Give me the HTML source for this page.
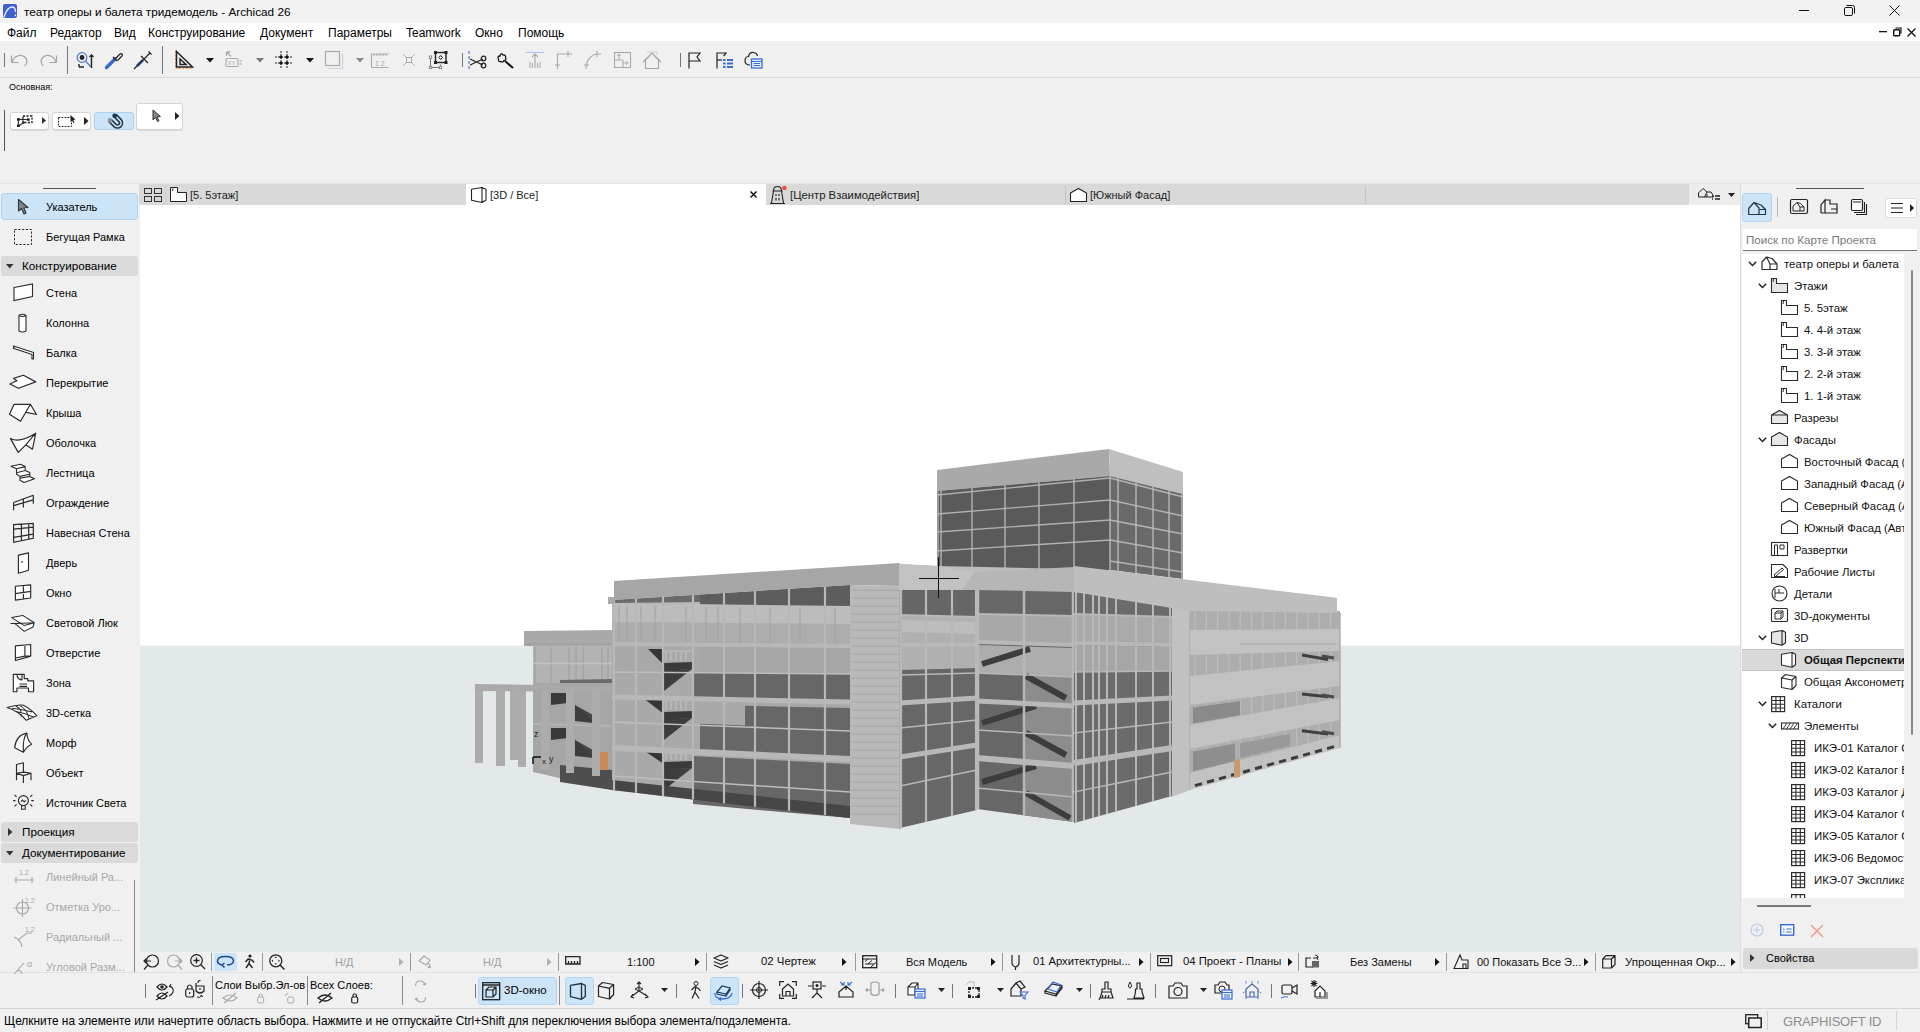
<!DOCTYPE html>
<html><head><meta charset="utf-8">
<style>
*{box-sizing:border-box}
html,body{margin:0;padding:0}
body{width:1920px;height:1032px;position:relative;overflow:hidden;background:#f0f0f0;font-family:"Liberation Sans",sans-serif;font-size:12px;color:#000}
.a{position:absolute}
.t{position:absolute;white-space:nowrap;line-height:1}
svg{position:absolute;overflow:visible}
.s{font-size:11px}
.g{color:#9a9a9a}
</style></head>
<body>
<!-- title bar -->
<div class="a" style="left:0;top:0;width:1920px;height:23px;background:#f2f2f2"></div>
<svg style="left:2px;top:3px" width="16" height="16"><rect x="1" y="1" width="14" height="14" rx="2" fill="#3d5fd0"/><path d="M2 14 C4 8 7 4 10 4 C12.5 4 13.5 6 13.5 9" stroke="#eaf2ff" stroke-width="1.3" fill="none"/><rect x="12.6" y="11.5" width="1.6" height="1.6" fill="#eaf2ff"/></svg>
<div class="t" style="left:24px;top:6px;font-size:11.75px">театр оперы и балета тридемодель - Archicad 26</div>
<svg style="left:1799px;top:10px" width="14" height="2"><rect x="0" y="0" width="10" height="1" fill="#111"/></svg>
<svg style="left:1844px;top:5px" width="12" height="12"><rect x="0.5" y="2.5" width="8" height="8" rx="1.3" stroke="#111" fill="none"/><path d="M2.5 0.5 H8.5 Q10.5 0.5 10.5 2.5 V8.5" stroke="#111" fill="none"/></svg>
<svg style="left:1889px;top:5px" width="12" height="12"><path d="M0.5 0.5 L10.5 10.5 M10.5 0.5 L0.5 10.5" stroke="#111" fill="none"/></svg>

<!-- menu bar -->
<div class="a" style="left:0;top:23px;width:1920px;height:18px;background:#fff"></div>
<div class="t" style="left:7px;top:27px">Файл</div>
<div class="t" style="left:50px;top:27px">Редактор</div>
<div class="t" style="left:114px;top:27px">Вид</div>
<div class="t" style="left:148px;top:27px">Конструирование</div>
<div class="t" style="left:260px;top:27px">Документ</div>
<div class="t" style="left:328px;top:27px">Параметры</div>
<div class="t" style="left:406px;top:27px">Teamwork</div>
<div class="t" style="left:475px;top:27px">Окно</div>
<div class="t" style="left:518px;top:27px">Помощь</div>
<svg style="left:1879px;top:31px" width="10" height="2"><rect width="8" height="1.3" fill="#111"/></svg>
<svg style="left:1893px;top:27px" width="10" height="10"><rect x="0.7" y="2.7" width="6" height="6" rx="1" stroke="#111" stroke-width="1.4" fill="none"/><path d="M2.5 1 H8 V6.5" stroke="#111" stroke-width="1.2" fill="none"/></svg>
<svg style="left:1907px;top:28px" width="10" height="10"><path d="M0.5 0.5 L8.5 8.5 M8.5 0.5 L0.5 8.5" stroke="#111" stroke-width="1.3" fill="none"/></svg>
<!-- toolbar line -->
<div class="a" style="left:0;top:77px;width:1920px;height:1px;background:#dadada"></div>
<!-- left toolbox -->
<div class="a" style="left:0;top:184px;width:139px;height:788px;background:#f0f0f0"></div>
<!-- tab bar -->
<div class="a" style="left:139px;top:184px;width:1601px;height:21px;background:#d9d9d9"></div>
<div class="a" style="left:466px;top:184px;width:300px;height:21px;background:#fff"></div>
<div class="a" style="left:1689px;top:184px;width:51px;height:21px;background:#ececec"></div>
<!-- viewport -->
<div class="a" style="left:140px;top:205px;width:1600px;height:441px;background:#fff"></div>
<div class="a" style="left:140px;top:646px;width:1600px;height:306px;background:#e3e9ea"></div>
<div class="a" style="left:140px;top:645px;width:1600px;height:1px;background:#f6f8f8"></div>
<!-- bottom control bar -->
<div class="a" style="left:140px;top:952px;width:1600px;height:20px;background:#f0f0f0"></div>
<div class="a" style="left:0;top:972px;width:1920px;height:1px;background:#e2e2e2"></div>
<div class="a" style="left:0;top:1008px;width:1920px;height:1px;background:#d6d6d6"></div>
<!-- right navigator -->
<div class="a" style="left:1740px;top:184px;width:1px;height:788px;background:#dcdcdc"></div>
<!-- main toolbar icons (y 51-69) -->
<div class="a" style="left:4px;top:53px;width:1px;height:14px;background:#777"></div>
<svg style="left:10px;top:52px" width="20" height="18"><path d="M1.5 10.5 V3.5 M1.5 10.5 H8.5 M2 10 C4 4 10 2 14 4.5 C18 7 17.5 12 14.5 14" stroke="#a6a6a6" stroke-width="1.2" fill="none"/></svg>
<svg style="left:39px;top:52px" width="20" height="18"><path d="M17.5 10.5 V3.5 M17.5 10.5 H10.5 M17 10 C15 4 9 2 5 4.5 C1 7 1.5 12 4.5 14" stroke="#a6a6a6" stroke-width="1.2" fill="none"/></svg>
<div class="a" style="left:67px;top:46px;width:1px;height:28px;background:#777"></div>
<svg style="left:76px;top:51px" width="20" height="19"><circle cx="6" cy="6.5" r="4.8" stroke="#4a78d8" stroke-width="1.2" fill="none"/><circle cx="6" cy="6.5" r="2.4" fill="#222"/><path d="M9.5 10 L15 16" stroke="#4a78d8" stroke-width="1.2"/><path d="M15.5 17 V4 M13.5 6 L15.5 4 L17.5 6 M3 16 H8 M3 16 V13" stroke="#222" stroke-width="1.4" fill="none"/></svg>
<svg style="left:104px;top:51px" width="20" height="19"><path d="M2.5 16.5 L11 8" stroke="#3d68cf" stroke-width="3.5" stroke-linecap="round"/><path d="M9 6 L13 10 M11.5 7.5 L15.5 3.5 Q17 2 18 3 Q19 4 17.5 5.5 L13.5 9.5" stroke="#222" stroke-width="1.2" fill="none"/></svg>
<svg style="left:133px;top:51px" width="20" height="19"><path d="M1 18 L4 15" stroke="#222" stroke-width="1.2"/><path d="M4 15 L10 9" stroke="#3d68cf" stroke-width="3"/><path d="M4 15 L13 6 M8 5 L15 12 M13 6 L17 2 M15.5 0.5 L18.5 3.5" stroke="#222" stroke-width="1.2" fill="none"/></svg>
<div class="a" style="left:162px;top:46px;width:1px;height:28px;background:#777"></div>
<svg style="left:174px;top:50px" width="20" height="20"><path d="M1.5 1 V18.5 H19" stroke="#f0a060" stroke-width="1" stroke-dasharray="2 1.5" fill="none"/><path d="M2.5 1.5 L18.5 17 H2.5 Z M6 9 L12 14.5 H6 Z" stroke="#222" stroke-width="1.5" fill="none"/></svg>
<svg style="left:206px;top:58px" width="9" height="5"><path d="M0 0 H8 L4 4.5 Z" fill="#111"/></svg>
<svg style="left:225px;top:51px" width="20" height="18"><path d="M1.5 1 L6 5.5 M1.5 1 V5 M1.5 1 H5.5" stroke="#aaa" stroke-width="1.3" fill="none"/><rect x="1" y="7.5" width="12" height="8" rx="1" stroke="#aaa" stroke-width="1.1" fill="none"/><text x="2.5" y="14" font-size="6" fill="#aaa" font-family="Liberation Sans">XY</text><path d="M14.5 10 H17 M14.5 13 H17" stroke="#aaa"/></svg>
<svg style="left:256px;top:58px" width="9" height="5"><path d="M0 0 H8 L4 4.5 Z" fill="#777"/></svg>
<svg style="left:275px;top:51px" width="20" height="19"><path d="M6 0 V18 M12 0 V18 M0 6 H18 M0 12 H18" stroke="#222" stroke-width="1" stroke-dasharray="2 1"/><circle cx="6" cy="6" r="1.6" fill="#111"/><circle cx="12" cy="6" r="1.6" fill="#111"/><circle cx="6" cy="12" r="1.6" fill="#111"/><circle cx="12" cy="12" r="1.6" fill="#111"/></svg>
<svg style="left:306px;top:58px" width="9" height="5"><path d="M0 0 H8 L4 4.5 Z" fill="#111"/></svg>
<svg style="left:325px;top:51px" width="20" height="19"><rect x="0.5" y="0.5" width="14" height="14" stroke="#aaa" stroke-width="1.2" fill="none"/><path d="M3 17.5 H17.5 V3" stroke="#c5d3e8" stroke-width="1.2" fill="none"/></svg>
<svg style="left:356px;top:58px" width="9" height="5"><path d="M0 0 H8 L4 4.5 Z" fill="#888"/></svg>
<svg style="left:371px;top:53px" width="20" height="16"><path d="M0.5 14.5 V1 H17.5 M17.5 14.5 H0.5 M3 1 V3 M6 1 V3 M9 1 V3 M12 1 V3 M15 1 V3" stroke="#aaa" stroke-width="1.1" fill="none"/><text x="4" y="12.5" font-size="7" fill="#aaa" font-family="Liberation Sans">1 2</text></svg>
<svg style="left:403px;top:54px" width="14" height="14"><rect x="3.5" y="3.5" width="5" height="5" stroke="#aaa" fill="none"/><path d="M0.5 0.5 L3.5 3.5 M11.5 0.5 L8.5 3.5 M0.5 11.5 L3.5 8.5 M11.5 11.5 L8.5 8.5" stroke="#aaa"/></svg>
<svg style="left:429px;top:50px" width="20" height="20"><rect x="6.5" y="2.5" width="10.5" height="10" stroke="#222" stroke-width="1.4" fill="none"/><rect x="5" y="1" width="3" height="3" fill="#222"/><rect x="15.5" y="1" width="3" height="3" fill="#222"/><rect x="5" y="11" width="3" height="3" fill="#222"/><rect x="15.5" y="11" width="3" height="3" fill="#222"/><path d="M11.7 5.5 L13.5 7.5 L11.7 9.5 L9.9 7.5 Z" stroke="#222" fill="none"/><path d="M1.5 7 V17.5 H11.5 V14.5" stroke="#777" fill="none"/><rect x="0.3" y="6" width="2.4" height="2.4" stroke="#777" fill="#fff" stroke-width="0.8"/><rect x="0.3" y="16.3" width="2.4" height="2.4" stroke="#777" fill="#fff" stroke-width="0.8"/><rect x="10.3" y="16.3" width="2.4" height="2.4" stroke="#777" fill="#fff" stroke-width="0.8"/></svg>
<div class="a" style="left:462px;top:53px;width:1px;height:14px;background:#777"></div>
<svg style="left:468px;top:51px" width="20" height="19"><path d="M1 0 V18" stroke="#3a62c8" stroke-dasharray="3 2"/><path d="M2 8 L15 14 M2 14 L15 8" stroke="#222" stroke-width="1.2"/><circle cx="15.5" cy="7.5" r="2.3" stroke="#222" stroke-width="1.2" fill="none"/><circle cx="15.5" cy="14.5" r="2.3" stroke="#222" stroke-width="1.2" fill="none"/></svg>
<svg style="left:497px;top:52px" width="20" height="17"><path d="M8 9 L16 16" stroke="#111" stroke-width="2"/><path d="M6 3 Q4 0 3 4 Q0 4 1.5 7 Q1 10 4 9.5 Q6 11 7 8.5 Q10 8 8.5 5.5 Q9 2.5 6 3 Z" stroke="#111" stroke-width="1.3" fill="none"/></svg>
<svg style="left:526px;top:51px" width="20" height="19"><path d="M0 1.5 H18" stroke="#a9c4ea" stroke-width="1.1"/><path d="M9 3 V17 M6 6 L9 3 L12 6 M4 11 V17 M14 11 V17 M6.5 12 V17 M11.5 12 V17" stroke="#aaa" stroke-width="1.1" fill="none"/></svg>
<svg style="left:555px;top:51px" width="20" height="19"><path d="M2.5 18 V3 H13 M13 0 V6 M13 3 H17 M0 14 H5" stroke="#aaa" stroke-width="1.1" fill="none"/></svg>
<svg style="left:584px;top:51px" width="20" height="19"><path d="M2 18 C2 10 6 4 13 3 M13 0 V6 M13 3 H17 M0 14 H5" stroke="#aaa" stroke-width="1.1" fill="none"/></svg>
<svg style="left:614px;top:51px" width="20" height="19"><rect x="0.5" y="1.5" width="16" height="15" stroke="#aaa" stroke-width="1.1" fill="none"/><path d="M0.5 9 H9 V16.5 M5 8 V3 M3 5 L5 3 L7 5 M9 12 H14 M12 10 L14 12 L12 14" stroke="#aaa" fill="none"/></svg>
<svg style="left:643px;top:51px" width="20" height="19"><path d="M2.5 17.5 V9 L9 2 L15.5 9 V17.5 Z M0 11 L9 2 L18 11" stroke="#aaa" stroke-width="1.2" fill="none"/><path d="M4 1 H14 V4" stroke="#ccc" fill="none"/></svg>
<div class="a" style="left:680px;top:53px;width:1px;height:14px;background:#777"></div>
<svg style="left:688px;top:52px" width="14" height="17"><path d="M1 16.5 V1 H12 L9 5 L12 9 H1" stroke="#222" stroke-width="1.2" fill="none"/></svg>
<svg style="left:716px;top:52px" width="19" height="17"><path d="M1 16.5 V1 H10 L7.5 4" stroke="#222" stroke-width="1.2" fill="none"/><path d="M1 8 H6" stroke="#222" stroke-width="1.2"/><rect x="7" y="7" width="2.5" height="2" fill="#3a6ad8"/><rect x="11" y="7" width="6" height="2" fill="#3a6ad8"/><rect x="7" y="10.5" width="2.5" height="2" fill="#3a6ad8"/><rect x="11" y="10.5" width="6" height="2" fill="#3a6ad8"/><rect x="7" y="14" width="2.5" height="2" fill="#3a6ad8"/><rect x="11" y="14" width="6" height="2" fill="#3a6ad8"/></svg>
<svg style="left:744px;top:51px" width="20" height="19"><path d="M6 14 Q1 14 1 9.5 Q1 6 4.5 5.5 Q5.5 1 9.5 1.5 Q13 2 13.5 5" stroke="#222" stroke-width="1.2" fill="none"/><rect x="7.5" y="8" width="10.5" height="9" stroke="#3a6ad8" stroke-width="1.3" fill="#e8f0fb"/><path d="M7.5 10.5 H18 M9.5 12.5 H16 M9.5 14.5 H16" stroke="#3a6ad8" stroke-width="1"/></svg>

<!-- info box -->
<div class="t" style="left:9px;top:83px;font-size:9px">Основная:</div>
<div class="a" style="left:4px;top:110px;width:1px;height:41px;background:#555"></div>
<div class="a" style="left:10px;top:112px;width:39px;height:18px;background:#fff;border:1px solid #d4d4d4;border-radius:3px;box-shadow:0 1px 0 #d8d8d8"></div>
<svg style="left:16px;top:114px" width="20" height="14"><rect x="7" y="2" width="9" height="6.5" stroke="#222" stroke-width="1.3" stroke-dasharray="2.2 1.3" fill="none"/><rect x="1" y="4.2" width="2.8" height="2.5" fill="#111"/><rect x="1" y="10.5" width="2.8" height="2.4" fill="#111"/><rect x="10.8" y="4.4" width="2.8" height="2.3" fill="#111"/><path d="M3.8 5.5 H10.8 M2.4 6.7 V10.5 M3.8 11.2 L7.8 8.4 M6.2 8.2 L8 8.3 L7.6 9.8" stroke="#222" stroke-width="1.1" fill="none"/></svg>
<svg style="left:42px;top:117px" width="6" height="8"><path d="M0 0 L4 3.5 L0 7 Z" fill="#333"/></svg>
<div class="a" style="left:52px;top:112px;width:39px;height:18px;background:#fff;border:1px solid #d4d4d4;border-radius:3px;box-shadow:0 1px 0 #d8d8d8"></div>
<svg style="left:58px;top:114px" width="20" height="14"><rect x="0.5" y="3.5" width="13" height="9" stroke="#222" stroke-dasharray="1.8 1.2" fill="none"/><path d="M12.5 1 L12.5 8 L14 6.5 L15.5 9 L16.5 8.5 L15.3 6 L17.5 5.5 Z" fill="#222"/></svg>
<svg style="left:84px;top:117px" width="6" height="8"><path d="M0 0 L4.5 4 L0 8 Z" fill="#222"/></svg>
<div class="a" style="left:94px;top:112px;width:40px;height:18px;background:#cce4f7;border:1px solid #aecfee;border-radius:3px"></div>
<svg style="left:106px;top:113px" width="18" height="18"><path d="M4 7.5 L9 12.5 A3.5 3.5 0 0 0 14 7.5 L9 2.5" stroke="#24374d" stroke-width="4.6" fill="none"/><path d="M4 7.5 L9 12.5 A3.5 3.5 0 0 0 14 7.5 L9 2.5" stroke="#cce4f7" stroke-width="1.6" fill="none"/><circle cx="8.6" cy="2.8" r="2.3" fill="#1e3346"/><circle cx="4" cy="7.4" r="2.3" fill="#8a9298"/></svg>
<div class="a" style="left:136px;top:103px;width:47px;height:27px;background:#fff;border:1px solid #d4d4d4;border-radius:3px;box-shadow:0 1px 0 #d8d8d8"></div>
<svg style="left:152px;top:109px" width="10" height="14"><path d="M1 1 L1 11 L3.5 8.5 L5.5 12.5 L7 11.8 L5 8 L8.5 7.5 Z" fill="#8a8a8a" stroke="#333" stroke-width="1"/></svg>
<svg style="left:175px;top:112px" width="6" height="8"><path d="M0 0 L4.5 4 L0 8 Z" fill="#222"/></svg>
<div class="a" style="left:0;top:183px;width:1920px;height:1px;background:#e4e4e4"></div>
<div class="a" style="left:43px;top:188px;width:53px;height:1px;background:#555"></div>
<div class="a" style="left:1px;top:193px;width:137px;height:27px;background:#cce4f7;border:1px solid #b3d4f0;border-radius:3px"></div>
<svg style="left:17px;top:198px" width="14" height="18"><path d="M1.5 1.5 L1.5 13 L4.5 10.5 L7 16 L9 15 L6.8 9.8 L11 9.5 Z" fill="#7e8790" stroke="#333" stroke-width="1.1" stroke-linejoin="round"/></svg>
<div class="t s" style="left:46px;top:202px">Указатель</div>
<svg style="left:14px;top:229px" width="20" height="18"><rect x="0.5" y="0.5" width="17" height="15" stroke="#2b2b2b" stroke-dasharray="2.2 1.6" fill="none"/></svg>
<div class="t s" style="left:46px;top:232px">Бегущая Рамка</div>
<div class="a" style="left:1px;top:256px;width:137px;height:20px;background:#dadada;border-radius:3px"></div>
<svg style="left:6px;top:263.5px" width="9" height="6"><path d="M0 0 H7.5 L3.75 4.5 Z" fill="#333"/></svg>
<div class="t" style="left:22px;top:260.0px;font-size:11.7px">Конструирование</div>
<svg style="left:13px;top:283px" width="24" height="20"><path d="M1 4.5 L19.5 1 V13.5 L1 17.5 Z" stroke="#2b2b2b" stroke-width="1.1" fill="#fff"/></svg>
<div class="t s" style="left:46px;top:288px">Стена</div>
<svg style="left:13px;top:313px" width="24" height="20"><path d="M6 2.5 Q9.5 0 13 2.5 V18 Q9.5 20 6 18 Z M6 2.5 Q9.5 4.5 13 2.5" stroke="#2b2b2b" stroke-width="1.1" fill="#fff"/></svg>
<div class="t s" style="left:46px;top:318px">Колонна</div>
<svg style="left:13px;top:343px" width="24" height="20"><path d="M0.5 3 L20.5 9.5 V16 L19 16 V11.5 L1 5.5 Z M0.5 3 V6" stroke="#2b2b2b" stroke-width="1.1" fill="#fff" stroke-linejoin="round"/></svg>
<div class="t s" style="left:46px;top:348px">Балка</div>
<svg style="left:13px;top:373px" width="24" height="20"><path d="M0.6 5.4 L10.4 2.2 L22.7 8.9 L5.5 15.3 L-3.2 11 L4 7.8 Z" stroke="#2b2b2b" stroke-width="1.2" fill="#fff" stroke-linejoin="round"/></svg>
<div class="t s" style="left:46px;top:378px">Перекрытие</div>
<svg style="left:13px;top:403px" width="24" height="20"><path d="M1.1 1.3 H17.4 L7.5 18.2 L-3.5 11.2 Z M17.4 1.3 L23.5 11.5 L13.3 9.4" stroke="#2b2b2b" stroke-width="1.2" fill="#fff" stroke-linejoin="round"/></svg>
<div class="t s" style="left:46px;top:408px">Крыша</div>
<svg style="left:13px;top:433px" width="24" height="20"><path d="M-2.6 5.4 Q6.4 10.5 22.7 0.2 L19.5 16.2 L12.8 11.8 L5.2 19.4 Z M22.7 0.2 L12.8 11.8" stroke="#2b2b2b" stroke-width="1.2" fill="#fff" stroke-linejoin="round"/></svg>
<div class="t s" style="left:46px;top:438px">Оболочка</div>
<svg style="left:13px;top:463px" width="24" height="20"><path d="M-2 3.3 L7.5 1.3 L12.2 3.6 V7.5 L16.8 9.6 V13.4 L21.5 15.8 L11 19.5 L7 17.3 V13.4 L3.5 11.3 V5.7 Z M3.5 5.7 L12.2 3.6 M3.5 9.7 L12.2 7.5 M7 13.4 L16.8 11.3 M7 15.3 L16.8 13.4" stroke="#2b2b2b" stroke-width="1.1" fill="#fff" stroke-linejoin="round"/></svg>
<div class="t s" style="left:46px;top:468px">Лестница</div>
<svg style="left:13px;top:493px" width="24" height="20"><path d="M0.6 9.5 V17.3 M10.4 6.3 V14.4 M20.3 2.2 V10.7 M0.6 9.5 L20.3 2.2 M0.6 12.7 L20.3 6.9" stroke="#2b2b2b" stroke-width="1.2" fill="none"/></svg>
<div class="t s" style="left:46px;top:498px">Ограждение</div>
<svg style="left:13px;top:523px" width="24" height="20"><path d="M0.6 1.6 L20.3 0.4 V15.3 L0.6 19.3 Z M8.4 1.1 V17.7 M15.7 0.7 V16.2 M0.6 6.2 L20.3 4.2 M0.6 14.4 L20.3 11.2" stroke="#2b2b2b" stroke-width="1.2" fill="none"/></svg>
<div class="t s" style="left:46px;top:528px">Навесная Стена</div>
<svg style="left:13px;top:553px" width="24" height="20"><path d="M5.4 2.1 L15.5 -0.1 V17.3 L5.4 20.3 Z" stroke="#2b2b2b" stroke-width="1.15" fill="#fff" stroke-linejoin="round"/><path d="M8 9.3 L10 8.5" stroke="#2b2b2b" stroke-width="1.1"/></svg>
<div class="t s" style="left:46px;top:558px">Дверь</div>
<svg style="left:13px;top:583px" width="24" height="20"><path d="M2.4 3.3 L17.7 1.9 V15 L2.4 17.1 Z M10.4 2.6 V16 M2.4 10.6 L17.7 8.4" stroke="#2b2b2b" stroke-width="1.15" fill="#fff" stroke-linejoin="round"/></svg>
<div class="t s" style="left:46px;top:588px">Окно</div>
<svg style="left:13px;top:613px" width="24" height="20"><path d="M1.7 10.4 L21.3 9.7 L19.9 14 L11.2 18.4 Z M-1.2 4.6 L9.7 2.4 L21.3 9.7 L11.2 12.6 Z M-2.5 10.4 H1.7" stroke="#2b2b2b" stroke-width="1.05" fill="#fff" stroke-linejoin="round"/></svg>
<div class="t s" style="left:46px;top:618px">Световой Люк</div>
<svg style="left:13px;top:643px" width="24" height="20"><path d="M2.4 2.9 L17.7 1.5 V13.1 L2.4 17.5 Z M11.9 1.9 V13.1 M2.4 15 L11.9 13.1 H17.7" stroke="#2b2b2b" stroke-width="1.15" fill="#fff" stroke-linejoin="round"/></svg>
<div class="t s" style="left:46px;top:648px">Отверстие</div>
<svg style="left:13px;top:673px" width="24" height="20"><path d="M0.3 1.3 H11.2 V5.6 H14.8 V7.8 H20.6 V18.7 H15.5 V15 H3.9 V18.7 H0.3 Z M4 1.3 Q4 6.8 9 6.8 V1.3 M6.5 11 H14 M6.5 13.3 H14" stroke="#2b2b2b" stroke-width="1.15" fill="#fff" stroke-linejoin="round"/></svg>
<div class="t s" style="left:46px;top:678px">Зона</div>
<svg style="left:13px;top:703px" width="24" height="20"><path d="M-5.8 4.6 Q3 1.5 10.4 2.2 Q18 6 23.8 12.7 L13.3 17.3 Q5 8 -5.8 4.6 Z M3 3 Q10 7 8 13.5 M6.5 2.4 Q14 6 16 15.5 M-1 5.2 Q10 6.5 19 9 M3 8.5 Q12 10 20.5 14" stroke="#2b2b2b" stroke-width="1.05" fill="#fff" stroke-linejoin="round"/></svg>
<div class="t s" style="left:46px;top:708px">3D-сетка</div>
<svg style="left:13px;top:733px" width="24" height="20"><path d="M13.9 0.1 Q3 2 1.7 14.7 L10.4 19.3 Q14 13 18.6 11.2 Q14 7 13.9 0.1 Z M13.9 0.1 Q9.5 5 10.4 19.3" stroke="#2b2b2b" stroke-width="1.15" fill="#fff" stroke-linejoin="round"/></svg>
<div class="t s" style="left:46px;top:738px">Морф</div>
<svg style="left:13px;top:763px" width="24" height="20"><path d="M3.5 17.2 V1.5 L10.4 -0.2 V9 M3.5 10.3 L10.4 12.6 L18 10.3 L11 9.1 Z M10.4 12.6 V20.1 M18 10.3 V17.2" stroke="#2b2b2b" stroke-width="1.15" fill="none" stroke-linejoin="round"/></svg>
<div class="t s" style="left:46px;top:768px">Объект</div>
<svg style="left:13px;top:793px" width="24" height="20"><circle cx="10.4" cy="7.6" r="5" stroke="#2b2b2b" stroke-width="1.15" fill="none"/><path d="M8.6 12.5 V16.3 H12.2 V12.5 M0 7.6 H2.5 M18.3 7.6 H20.8 M1.5 1.8 L3.6 3.9 M19.3 1.8 L17.2 3.9 M1.5 13.4 L3.6 11.3 M19.3 13.4 L17.2 11.3 M8 8.6 L9.5 7 L11.2 9 L12.8 7.4" stroke="#2b2b2b" stroke-width="1.1" fill="none"/></svg>
<div class="t s" style="left:46px;top:798px">Источник Света</div>
<div class="a" style="left:1px;top:822px;width:137px;height:20px;background:#dadada;border-radius:3px"></div>
<svg style="left:8px;top:828.0px" width="6" height="9"><path d="M0 0 L4.5 4 L0 8 Z" fill="#333"/></svg>
<div class="t" style="left:22px;top:826.0px;font-size:11.7px">Проекция</div>
<div class="a" style="left:1px;top:843px;width:137px;height:20px;background:#dadada;border-radius:3px"></div>
<svg style="left:6px;top:850.5px" width="9" height="6"><path d="M0 0 H7.5 L3.75 4.5 Z" fill="#333"/></svg>
<div class="t" style="left:22px;top:847.0px;font-size:11.7px">Документирование</div>
<svg style="left:13px;top:867px" width="24" height="20"><path d="M1 13 H21 M3 10 V16 M19 10 V16" stroke="#a8a8a8" stroke-width="1.1" fill="none"/><text x="6" y="8" font-size="7" fill="#a8a8a8" font-family="Liberation Sans">1.2</text></svg>
<div class="t s" style="left:46px;top:872px;color:#a8a8a8">Линейный Ра...</div>
<svg style="left:13px;top:897px" width="24" height="20"><circle cx="9.5" cy="11" r="6" stroke="#a8a8a8" stroke-width="1.1" fill="none"/><path d="M9.5 2 V20 M0.5 11 H18.5" stroke="#a8a8a8" stroke-width="1.1"/><text x="12" y="6" font-size="7" fill="#a8a8a8" font-family="Liberation Sans">1.2</text></svg>
<div class="t s" style="left:46px;top:902px;color:#a8a8a8">Отметка Уро...</div>
<svg style="left:13px;top:927px" width="24" height="20"><path d="M1 10 Q8 13 9 20 M5 13 L14 6 H19" stroke="#a8a8a8" stroke-width="1.1" fill="none"/><text x="12" y="5" font-size="7" fill="#a8a8a8" font-family="Liberation Sans">1.2</text></svg>
<div class="t s" style="left:46px;top:932px;color:#a8a8a8">Радиальный ...</div>
<svg style="left:13px;top:957px" width="24" height="20"><path d="M1 17 L11 6 M4 14 Q8 12 9 17" stroke="#a8a8a8" stroke-width="1.1" fill="none"/><text x="14" y="10" font-size="9" fill="#a8a8a8" font-family="Liberation Sans">α</text></svg>
<div class="t s" style="left:46px;top:962px;color:#a8a8a8">Угловой Разм...</div>
<div class="a" style="left:134px;top:880px;width:1px;height:92px;background:#888"></div>
<!-- tabs -->
<svg style="left:144px;top:188px" width="20" height="16"><rect x="0.5" y="0.5" width="7" height="5" stroke="#333" fill="none"/><rect x="10.5" y="0.5" width="7" height="5" stroke="#333" fill="none"/><rect x="0.5" y="8.5" width="7" height="5" stroke="#333" fill="none"/><rect x="10.5" y="8.5" width="7" height="5" stroke="#333" fill="none"/></svg>
<div class="a" style="left:165px;top:186px;width:1px;height:18px;background:#cfcfcf"></div>
<svg style="left:170px;top:187px" width="20" height="17"><path d="M0.5 0.5 H7.5 V5.5 H16.5 V14.5 H0.5 Z" stroke="#222" fill="#fff"/><path d="M3 1.5 L2.5 4" stroke="#222"/></svg>
<div class="t s" style="left:190px;top:190px;color:#222">[5. 5этаж]</div>
<svg style="left:471px;top:187px" width="18" height="17"><path d="M0.5 2.3 L11 0.5 V15.5 L0.5 13.3 Z M11 0.5 L15 2.3 V13 L11 15.5" stroke="#222" stroke-width="1.1" fill="#fff" stroke-linejoin="round"/></svg>
<div class="t s" style="left:490px;top:190px;color:#222">[3D / Все]</div>
<svg style="left:750px;top:191px" width="8" height="8"><path d="M0.5 0.5 L6.5 6.5 M6.5 0.5 L0.5 6.5" stroke="#111" stroke-width="1.5"/></svg>
<svg style="left:769px;top:185px" width="20" height="20"><path d="M4.5 6 Q4.5 1.5 8.5 1.5 Q12.5 1.5 12.5 6 Z M3.5 6 H13.5 M4.5 6 L2.5 18 M12.5 6 L14.5 18 M1 18.5 H16 M7 9 V11 M7 13 V15.5 M10 9 V11 M10 13 V15.5" stroke="#222" stroke-width="1.1" fill="none"/><circle cx="15.5" cy="3" r="2.3" fill="#e8503a"/></svg>
<div class="t" style="left:790px;top:189.5px;font-size:11.3px;color:#222">[Центр Взаимодействия]</div>
<div class="a" style="left:1065px;top:186px;width:1px;height:18px;background:#c4c4c4"></div>
<svg style="left:1070px;top:188px" width="18" height="15"><path d="M0.5 5 L8.5 0.5 L16.5 5 V13.5 H0.5 Z" stroke="#222" stroke-width="1.1" fill="#fff"/></svg>
<div class="t s" style="left:1090px;top:190px;color:#222">[Южный Фасад]</div>
<div class="a" style="left:1365px;top:186px;width:1px;height:18px;background:#c4c4c4"></div>
<svg style="left:1698px;top:188px" width="24" height="15"><path d="M0.5 9 V5 L5 0.5 L9 4 H13 L15.5 8 V9 Z M9 4 L6.5 9 M9 9 V6" stroke="#222" fill="none"/><path d="M14 8 H15 M14 11 H15 M17 8 H22 M17 11 H22" stroke="#222" stroke-width="1.6"/></svg>
<svg style="left:1728px;top:193px" width="8" height="5"><path d="M0 0 H7 L3.5 4 Z" fill="#222"/></svg>
<div class="a" style="left:1796px;top:188px;width:68px;height:1px;background:#555"></div>
<div class="a" style="left:1742px;top:193px;width:30px;height:29px;background:#cce4f7;border:1px solid #b3d4f0;border-radius:3px"></div>
<svg style="left:1748px;top:201px" width="19" height="15"><path d="M0.7 13.5 V7.5 L6 1.5 L11 7 V13.5 Z M6 1.5 L13 4 L17.5 8.5 V13.5 H11 M11 8.5 H17.5" stroke="#1e3346" stroke-width="1.2" fill="none" stroke-linejoin="round"/></svg>
<div class="a" style="left:1777px;top:197px;width:1px;height:20px;background:#bbb"></div>
<svg style="left:1790px;top:199px" width="20" height="16"><rect x="0.5" y="0.5" width="17" height="14" rx="1.5" stroke="#222" stroke-width="1.2" fill="none"/><path d="M3 12 V7 L7 3.5 L10.5 4.5 L14 8 V12 Z M7 3.5 L10 8 V12 M10 8 H14" stroke="#222" fill="none"/></svg>
<svg style="left:1820px;top:199px" width="20" height="16"><path d="M1 14 V6 L5 1 L5 14 M5 1 H10 V5 H17 V14 H1 M11 10 H17" stroke="#222" stroke-width="1.2" fill="none"/></svg>
<svg style="left:1851px;top:199px" width="18" height="17"><rect x="0.5" y="0.5" width="11" height="11" rx="1.5" stroke="#222" stroke-width="1.2" fill="#fff"/><path d="M13.5 3 V13.5 H3 M15.5 5 V15.5 H5" stroke="#222" stroke-width="1.1" fill="none"/><path d="M2 3 H10" stroke="#222"/></svg>
<div class="a" style="left:1885px;top:198px;width:32px;height:20px;background:#fff;border:1px solid #dcdcdc;border-radius:3px"></div>
<svg style="left:1890px;top:202px" width="26" height="12"><path d="M1 1.5 H13 M1 6 H13 M1 10.5 H13" stroke="#222" stroke-width="1.2"/><path d="M20 2 L24 6 L20 10 Z" fill="#222"/></svg>
<div class="a" style="left:1743px;top:229px;width:174px;height:22px;background:#fff;border-bottom:1px solid #777"></div>
<div class="t" style="left:1746px;top:234px;font-size:11.6px;color:#7a7a7a">Поиск по Карте Проекта</div>
<div class="a" style="left:1742px;top:254px;width:162px;height:644px;background:#fff;overflow:hidden">
<svg style="left:6px;top:7px" width="10" height="7"><path d="M0.8 0.8 L4.5 4.5 L8.2 0.8" stroke="#222" stroke-width="1.5" fill="none"/></svg>
<svg style="left:19px;top:2px" width="18" height="16"><path d="M1 13.5 V6 L5.5 1 L11 2.5 L16 8 V13.5 Z M5.5 1 L9 8 V13.5 M9 8 H16" stroke="#2b2b2b" stroke-width="1.2" fill="#fff" stroke-linejoin="round"/></svg>
<div class="t" style="left:42px;top:5px;font-size:11.4px;color:#111">театр оперы и балета</div>
<svg style="left:16px;top:29px" width="10" height="7"><path d="M0.8 0.8 L4.5 4.5 L8.2 0.8" stroke="#222" stroke-width="1.5" fill="none"/></svg>
<svg style="left:29px;top:24px" width="18" height="16"><path d="M0.5 0.5 H5.5 V5.5 H16.5 V14.5 H0.5 Z" stroke="#2b2b2b" stroke-width="1.1" fill="#e6e6e6"/><path d="M2.5 1 L2 4" stroke="#2b2b2b"/></svg>
<div class="t" style="left:52px;top:27px;font-size:11.4px;color:#111">Этажи</div>
<svg style="left:39px;top:46px" width="18" height="16"><path d="M0.5 0.5 H5.5 V5.5 H16.5 V14.5 H0.5 Z" stroke="#2b2b2b" stroke-width="1.1" fill="#fff"/><path d="M2.5 1 L2 4" stroke="#2b2b2b"/></svg>
<div class="t" style="left:62px;top:49px;font-size:11.4px;color:#111">5. 5этаж</div>
<svg style="left:39px;top:68px" width="18" height="16"><path d="M0.5 0.5 H5.5 V5.5 H16.5 V14.5 H0.5 Z" stroke="#2b2b2b" stroke-width="1.1" fill="#fff"/><path d="M2.5 1 L2 4" stroke="#2b2b2b"/></svg>
<div class="t" style="left:62px;top:71px;font-size:11.4px;color:#111">4. 4-й этаж</div>
<svg style="left:39px;top:90px" width="18" height="16"><path d="M0.5 0.5 H5.5 V5.5 H16.5 V14.5 H0.5 Z" stroke="#2b2b2b" stroke-width="1.1" fill="#fff"/><path d="M2.5 1 L2 4" stroke="#2b2b2b"/></svg>
<div class="t" style="left:62px;top:93px;font-size:11.4px;color:#111">3. 3-й этаж</div>
<svg style="left:39px;top:112px" width="18" height="16"><path d="M0.5 0.5 H5.5 V5.5 H16.5 V14.5 H0.5 Z" stroke="#2b2b2b" stroke-width="1.1" fill="#fff"/><path d="M2.5 1 L2 4" stroke="#2b2b2b"/></svg>
<div class="t" style="left:62px;top:115px;font-size:11.4px;color:#111">2. 2-й этаж</div>
<svg style="left:39px;top:134px" width="18" height="16"><path d="M0.5 0.5 H5.5 V5.5 H16.5 V14.5 H0.5 Z" stroke="#2b2b2b" stroke-width="1.1" fill="#fff"/><path d="M2.5 1 L2 4" stroke="#2b2b2b"/></svg>
<div class="t" style="left:62px;top:137px;font-size:11.4px;color:#111">1. 1-й этаж</div>
<svg style="left:29px;top:156px" width="18" height="16"><path d="M0.5 5 L8.5 0.5 L16.5 5 V13.5 H0.5 Z M0.5 5 H16.5" stroke="#2b2b2b" stroke-width="1.1" fill="#e8e8e8"/></svg>
<div class="t" style="left:52px;top:159px;font-size:11.4px;color:#111">Разрезы</div>
<svg style="left:16px;top:183px" width="10" height="7"><path d="M0.8 0.8 L4.5 4.5 L8.2 0.8" stroke="#222" stroke-width="1.5" fill="none"/></svg>
<svg style="left:29px;top:178px" width="18" height="16"><path d="M0.5 5 L8.5 0.5 L16.5 5 V13.5 H0.5 Z" stroke="#2b2b2b" stroke-width="1.1" fill="#e6e6e6"/></svg>
<div class="t" style="left:52px;top:181px;font-size:11.4px;color:#111">Фасады</div>
<svg style="left:39px;top:200px" width="18" height="16"><path d="M0.5 5 L8.5 0.5 L16.5 5 V13.5 H0.5 Z" stroke="#2b2b2b" stroke-width="1.1" fill="#fff"/></svg>
<div class="t" style="left:62px;top:203px;font-size:11.4px;color:#111">Восточный Фасад (Авт</div>
<svg style="left:39px;top:222px" width="18" height="16"><path d="M0.5 5 L8.5 0.5 L16.5 5 V13.5 H0.5 Z" stroke="#2b2b2b" stroke-width="1.1" fill="#fff"/></svg>
<div class="t" style="left:62px;top:225px;font-size:11.4px;color:#111">Западный Фасад (Авт</div>
<svg style="left:39px;top:244px" width="18" height="16"><path d="M0.5 5 L8.5 0.5 L16.5 5 V13.5 H0.5 Z" stroke="#2b2b2b" stroke-width="1.1" fill="#fff"/></svg>
<div class="t" style="left:62px;top:247px;font-size:11.4px;color:#111">Северный Фасад (Авт</div>
<svg style="left:39px;top:266px" width="18" height="16"><path d="M0.5 5 L8.5 0.5 L16.5 5 V13.5 H0.5 Z" stroke="#2b2b2b" stroke-width="1.1" fill="#fff"/></svg>
<div class="t" style="left:62px;top:269px;font-size:11.4px;color:#111">Южный Фасад (Авт</div>
<svg style="left:29px;top:288px" width="18" height="16"><rect x="0.5" y="0.5" width="16" height="13" stroke="#2b2b2b" stroke-width="1.1" fill="none"/><path d="M3.5 3 V13 M3.5 3 H6.5 V13 M9 3 H13 V7 H9 Z" stroke="#2b2b2b" fill="none"/></svg>
<div class="t" style="left:52px;top:291px;font-size:11.4px;color:#111">Развертки</div>
<svg style="left:29px;top:310px" width="18" height="16"><path d="M0.5 0.5 H12 L16.5 5 V13.5 H0.5 Z" stroke="#2b2b2b" stroke-width="1.1" fill="none"/><path d="M3 11 L11 4 L12.5 5.5 L4.5 12.5 Z M3 12.5 H14" stroke="#2b2b2b" fill="none"/></svg>
<div class="t" style="left:52px;top:313px;font-size:11.4px;color:#111">Рабочие Листы</div>
<svg style="left:29px;top:332px" width="18" height="16"><circle cx="8.5" cy="7.5" r="7.5" stroke="#2b2b2b" stroke-width="1.1" fill="none"/><path d="M4 3 V12 M4 7 H13 M8 3 V7" stroke="#2b2b2b" fill="none"/></svg>
<div class="t" style="left:52px;top:335px;font-size:11.4px;color:#111">Детали</div>
<svg style="left:29px;top:354px" width="18" height="16"><rect x="0.5" y="0.5" width="16" height="13" rx="1" stroke="#2b2b2b" stroke-width="1.1" fill="none"/><path d="M4 11 V5 L6 3 H12 V9 L10 11 Z M4 5 H10 V11 M10 5 L12 3" stroke="#2b2b2b" fill="none"/></svg>
<div class="t" style="left:52px;top:357px;font-size:11.4px;color:#111">3D-документы</div>
<svg style="left:16px;top:381px" width="10" height="7"><path d="M0.8 0.8 L4.5 4.5 L8.2 0.8" stroke="#222" stroke-width="1.5" fill="none"/></svg>
<svg style="left:29px;top:376px" width="18" height="16"><path d="M0.5 2.3 L11 0.5 V15.3 L0.5 13 Z M11 0.5 L14.5 2.3 V12.8 L11 15.3" stroke="#2b2b2b" stroke-width="1.1" fill="#e6e6e6" stroke-linejoin="round"/></svg>
<div class="t" style="left:52px;top:379px;font-size:11.4px;color:#111">3D</div>
<div class="a" style="left:0;top:395px;width:162px;height:22px;background:#d9d9d9;border-top:1px solid #bdbdbd;border-bottom:1px solid #bdbdbd"></div>
<svg style="left:39px;top:398px" width="18" height="16"><path d="M0.5 2.3 L11 0.5 V15.3 L0.5 13 Z M11 0.5 L14.5 2.3 V12.8 L11 15.3" stroke="#2b2b2b" stroke-width="1.1" fill="#fff" stroke-linejoin="round"/></svg>
<div class="t" style="left:62px;top:401px;font-size:11.4px;font-weight:bold;color:#111">Общая Перспектива</div>
<svg style="left:39px;top:420px" width="18" height="16"><path d="M0.5 4 L4.5 0.5 L15 2.5 L11 6 Z M0.5 4 V13.5 L11 15.5 V6 M15 2.5 V11.5 L11 15.5" stroke="#2b2b2b" stroke-width="1.1" fill="#fff" stroke-linejoin="round"/></svg>
<div class="t" style="left:62px;top:423px;font-size:11.4px;color:#111">Общая Аксонометрия</div>
<svg style="left:16px;top:447px" width="10" height="7"><path d="M0.8 0.8 L4.5 4.5 L8.2 0.8" stroke="#222" stroke-width="1.5" fill="none"/></svg>
<svg style="left:29px;top:442px" width="18" height="16"><rect x="0.6" y="0.6" width="13" height="15" stroke="#2b2b2b" stroke-width="1.2" fill="none"/><path d="M0.6 4.5 H13.6 M0.6 8.2 H13.6 M0.6 12 H13.6 M4.9 0.6 V15.6 M9.3 0.6 V15.6" stroke="#2b2b2b" stroke-width="1.1" fill="none"/></svg>
<div class="t" style="left:52px;top:445px;font-size:11.4px;color:#111">Каталоги</div>
<svg style="left:26px;top:469px" width="10" height="7"><path d="M0.8 0.8 L4.5 4.5 L8.2 0.8" stroke="#222" stroke-width="1.5" fill="none"/></svg>
<svg style="left:39px;top:464px" width="18" height="16"><g transform="translate(0,4.5)"><rect x="0.5" y="0.5" width="17" height="6" stroke="#2b2b2b" stroke-width="1.1" fill="none"/><path d="M2 6.5 L6 0.5 M5.5 6.5 L9.5 0.5 M9 6.5 L13 0.5 M12.5 6.5 L16.5 0.5" stroke="#2b2b2b" stroke-width="0.9"/></g></svg>
<div class="t" style="left:62px;top:467px;font-size:11.4px;color:#111">Элементы</div>
<svg style="left:49px;top:486px" width="18" height="16"><rect x="0.6" y="0.6" width="13" height="15" stroke="#2b2b2b" stroke-width="1.2" fill="none"/><path d="M0.6 4.5 H13.6 M0.6 8.2 H13.6 M0.6 12 H13.6 M4.9 0.6 V15.6 M9.3 0.6 V15.6" stroke="#2b2b2b" stroke-width="1.1" fill="none"/></svg>
<div class="t" style="left:72px;top:489px;font-size:11.4px;color:#111">ИКЭ-01 Каталог Стен</div>
<svg style="left:49px;top:508px" width="18" height="16"><rect x="0.6" y="0.6" width="13" height="15" stroke="#2b2b2b" stroke-width="1.2" fill="none"/><path d="M0.6 4.5 H13.6 M0.6 8.2 H13.6 M0.6 12 H13.6 M4.9 0.6 V15.6 M9.3 0.6 V15.6" stroke="#2b2b2b" stroke-width="1.1" fill="none"/></svg>
<div class="t" style="left:72px;top:511px;font-size:11.4px;color:#111">ИКЭ-02 Каталог Балок</div>
<svg style="left:49px;top:530px" width="18" height="16"><rect x="0.6" y="0.6" width="13" height="15" stroke="#2b2b2b" stroke-width="1.2" fill="none"/><path d="M0.6 4.5 H13.6 M0.6 8.2 H13.6 M0.6 12 H13.6 M4.9 0.6 V15.6 M9.3 0.6 V15.6" stroke="#2b2b2b" stroke-width="1.1" fill="none"/></svg>
<div class="t" style="left:72px;top:533px;font-size:11.4px;color:#111">ИКЭ-03 Каталог Дверей</div>
<svg style="left:49px;top:552px" width="18" height="16"><rect x="0.6" y="0.6" width="13" height="15" stroke="#2b2b2b" stroke-width="1.2" fill="none"/><path d="M0.6 4.5 H13.6 M0.6 8.2 H13.6 M0.6 12 H13.6 M4.9 0.6 V15.6 M9.3 0.6 V15.6" stroke="#2b2b2b" stroke-width="1.1" fill="none"/></svg>
<div class="t" style="left:72px;top:555px;font-size:11.4px;color:#111">ИКЭ-04 Каталог Окон</div>
<svg style="left:49px;top:574px" width="18" height="16"><rect x="0.6" y="0.6" width="13" height="15" stroke="#2b2b2b" stroke-width="1.2" fill="none"/><path d="M0.6 4.5 H13.6 M0.6 8.2 H13.6 M0.6 12 H13.6 M4.9 0.6 V15.6 M9.3 0.6 V15.6" stroke="#2b2b2b" stroke-width="1.1" fill="none"/></svg>
<div class="t" style="left:72px;top:577px;font-size:11.4px;color:#111">ИКЭ-05 Каталог Стен</div>
<svg style="left:49px;top:596px" width="18" height="16"><rect x="0.6" y="0.6" width="13" height="15" stroke="#2b2b2b" stroke-width="1.2" fill="none"/><path d="M0.6 4.5 H13.6 M0.6 8.2 H13.6 M0.6 12 H13.6 M4.9 0.6 V15.6 M9.3 0.6 V15.6" stroke="#2b2b2b" stroke-width="1.1" fill="none"/></svg>
<div class="t" style="left:72px;top:599px;font-size:11.4px;color:#111">ИКЭ-06 Ведомость</div>
<svg style="left:49px;top:618px" width="18" height="16"><rect x="0.6" y="0.6" width="13" height="15" stroke="#2b2b2b" stroke-width="1.2" fill="none"/><path d="M0.6 4.5 H13.6 M0.6 8.2 H13.6 M0.6 12 H13.6 M4.9 0.6 V15.6 M9.3 0.6 V15.6" stroke="#2b2b2b" stroke-width="1.1" fill="none"/></svg>
<div class="t" style="left:72px;top:621px;font-size:11.4px;color:#111">ИКЭ-07 Экспликация</div>
<svg style="left:49px;top:640px" width="18" height="16"><rect x="0.6" y="0.6" width="13" height="15" stroke="#2b2b2b" stroke-width="1.2" fill="none"/><path d="M0.6 4.5 H13.6 M0.6 8.2 H13.6 M0.6 12 H13.6 M4.9 0.6 V15.6 M9.3 0.6 V15.6" stroke="#2b2b2b" stroke-width="1.1" fill="none"/></svg>
<div class="t" style="left:72px;top:643px;font-size:11.4px;color:#111">ИКЭ-08 Каталог</div>
</div>
<div class="a" style="left:1911px;top:270px;width:2px;height:465px;background:#8a8a8a;border-radius:1px"></div>
<div class="a" style="left:1757px;top:905px;width:54px;height:2px;background:#777"></div>
<svg style="left:1750px;top:923px" width="15" height="15"><circle cx="7" cy="7" r="6" stroke="#b8c8e8" stroke-width="1.1" fill="none"/><path d="M7 3.5 V10.5 M3.5 7 H10.5" stroke="#b8c8e8"/></svg>
<svg style="left:1780px;top:924px" width="16" height="13"><rect x="0.7" y="0.7" width="13" height="10.5" stroke="#3a6ad8" stroke-width="1.4" fill="#f4f8fe"/><path d="M3 5 H4.5 M6.5 5 H11.5 M3 8 H4.5 M6.5 8 H11.5" stroke="#3a6ad8" stroke-width="1.2"/></svg>
<svg style="left:1810px;top:924px" width="15" height="15"><path d="M1 1 L13 13 M13 1 L1 13" stroke="#f0a090" stroke-width="1.6"/></svg>
<div class="a" style="left:1743px;top:948px;width:175px;height:21px;background:#d9d9d9;border-radius:3px"></div>
<svg style="left:1750px;top:954px" width="6" height="9"><path d="M0 0 L4.5 4 L0 8 Z" fill="#333"/></svg>
<div class="t s" style="left:1766px;top:953px">Свойства</div>
<svg style="left:143px;top:954px" width="18" height="17"><circle cx="9.5" cy="7" r="6" stroke="#222" stroke-width="1.2" fill="none"/><path d="M1 7 H8 M3.5 4.5 L1 7 L3.5 9.5 M5 11 L1 15.5" stroke="#222" stroke-width="1.2" fill="none"/></svg>
<svg style="left:166px;top:954px" width="18" height="17"><circle cx="7.5" cy="7" r="6" stroke="#a8a8a8" stroke-width="1.2" fill="none"/><path d="M9 7 H16 M13.5 4.5 L16 7 L13.5 9.5 M12 11 L16 15.5" stroke="#a8a8a8" stroke-width="1.2" fill="none"/></svg>
<svg style="left:190px;top:954px" width="18" height="17"><circle cx="6.5" cy="6.5" r="5.8" stroke="#222" stroke-width="1.2" fill="none"/><path d="M6.5 3.5 V9.5 M3.5 6.5 H9.5 M10.5 10.5 L15 15" stroke="#222" stroke-width="1.3" fill="none"/></svg>
<div class="a" style="left:211px;top:953px;width:1px;height:18px;background:#9a9a9a"></div>
<div class="a" style="left:214px;top:953px;width:23px;height:18px;background:#cce4f7;border-radius:2px"></div>
<svg style="left:217px;top:955px" width="18" height="14"><path d="M5 10 Q0.5 9 0.5 6 Q0.5 1.5 8.5 1.5 Q16.5 1.5 16.5 6 Q16.5 9.5 10 10 M7.5 8 L5 10 L7.5 12.5" stroke="#1f4a8a" stroke-width="1.5" fill="none"/></svg>
<svg style="left:244px;top:954px" width="12" height="17"><circle cx="6" cy="2" r="1.6" fill="#222"/><path d="M6 4.5 L5 9.5 L2 14 M5 9.5 L8.5 14 M1.5 8 L4 5 L8 6 L10 8.5" stroke="#222" stroke-width="1.4" fill="none"/></svg>
<div class="a" style="left:262px;top:953px;width:1px;height:18px;background:#9a9a9a"></div>
<svg style="left:269px;top:954px" width="18" height="17"><circle cx="6.8" cy="6.8" r="6" stroke="#222" stroke-width="1.3" fill="none"/><path d="M11 11 L15.5 15.5" stroke="#222" stroke-width="1.5"/><path d="M6.8 2.5 L5.5 4 H8 Z M6.8 11 L5.5 9.5 H8 Z M2.5 6.8 L4 5.5 V8 Z M11 6.8 L9.5 5.5 V8 Z" fill="#222"/></svg>
<div class="t" style="left:335px;top:956.5px;font-size:11px;color:#a0a0a0">Н/Д</div>
<svg style="left:399px;top:958px" width="6" height="9"><path d="M0 0 L4.5 4 L0 8 Z" fill="#b0b0b0"/></svg>
<div class="a" style="left:410px;top:953px;width:1px;height:18px;background:#9a9a9a"></div>
<svg style="left:418px;top:954px" width="16" height="16"><path d="M1 7 L6 2 L12 6 L8 11 Z M10 9 Q13 11 11 14 M11 14 L9.5 12 M11 14 L13 13" stroke="#a8a8a8" stroke-width="1.1" fill="none"/></svg>
<div class="t" style="left:483px;top:956.5px;font-size:11px;color:#a0a0a0">Н/Д</div>
<svg style="left:547px;top:958px" width="6" height="9"><path d="M0 0 L4.5 4 L0 8 Z" fill="#b0b0b0"/></svg>
<div class="a" style="left:558px;top:953px;width:1px;height:18px;background:#9a9a9a"></div>
<svg style="left:565px;top:956px" width="16" height="10"><path d="M0.7 0.7 H15 V8 H0.7 Z M3.5 5 V8 M6.5 5 V8 M9.5 5 V8 M12.5 5 V8" stroke="#222" stroke-width="1.3" fill="none"/></svg>
<div class="t" style="left:627px;top:956.5px;font-size:11px;color:#111">1:100</div>
<svg style="left:695px;top:958px" width="6" height="9"><path d="M0 0 L4.5 4 L0 8 Z" fill="#111"/></svg>
<div class="a" style="left:706px;top:953px;width:1px;height:18px;background:#9a9a9a"></div>
<svg style="left:713px;top:954px" width="16" height="16"><path d="M1 4 L8 1 L15 4 L8 7 Z M1 7.5 L8 10.5 L15 7.5 M1 11 L8 14 L15 11" stroke="#222" stroke-width="1.3" fill="none" stroke-linejoin="round"/></svg>
<div class="t" style="left:761px;top:956.3px;font-size:11.4px;color:#111">02 Чертеж</div>
<svg style="left:842px;top:958px" width="6" height="9"><path d="M0 0 L4.5 4 L0 8 Z" fill="#111"/></svg>
<div class="a" style="left:855px;top:953px;width:1px;height:18px;background:#9a9a9a"></div>
<svg style="left:862px;top:955px" width="16" height="14"><rect x="0.7" y="0.7" width="14" height="12" stroke="#222" stroke-width="1.3" fill="none"/><path d="M0.7 4 H14.7 M3 6.5 L6 4 M6 9 L10 5.5 M9 12 L14 7.5 M3 9 H12" stroke="#222" stroke-width="1" fill="none"/></svg>
<div class="t" style="left:906px;top:956.5px;font-size:11px;color:#111">Вся Модель</div>
<svg style="left:991px;top:958px" width="6" height="9"><path d="M0 0 L4.5 4 L0 8 Z" fill="#111"/></svg>
<div class="a" style="left:1002px;top:953px;width:1px;height:18px;background:#9a9a9a"></div>
<svg style="left:1011px;top:954px" width="10" height="17"><path d="M1 1 V9 Q1 12 4.5 13 V16 M8 1 V9 Q8 12 4.5 13" stroke="#222" stroke-width="1.2" fill="none"/></svg>
<div class="t" style="left:1033px;top:956.4px;font-size:11.2px;color:#111">01 Архитектурны...</div>
<svg style="left:1139px;top:958px" width="6" height="9"><path d="M0 0 L4.5 4 L0 8 Z" fill="#111"/></svg>
<div class="a" style="left:1150px;top:953px;width:1px;height:18px;background:#9a9a9a"></div>
<svg style="left:1157px;top:955px" width="16" height="12"><rect x="0.7" y="0.7" width="14" height="10" stroke="#222" stroke-width="1.2" fill="none"/><rect x="3.5" y="3.5" width="8" height="4" stroke="#222" stroke-width="1.1" fill="none"/></svg>
<div class="t" style="left:1183px;top:956.4px;font-size:11.3px;color:#111">04 Проект - Планы</div>
<svg style="left:1288px;top:958px" width="6" height="9"><path d="M0 0 L4.5 4 L0 8 Z" fill="#111"/></svg>
<div class="a" style="left:1298px;top:953px;width:1px;height:18px;background:#9a9a9a"></div>
<svg style="left:1305px;top:954px" width="16" height="16"><path d="M6 4 H1 V13 H8" stroke="#222" stroke-width="1.2" fill="none"/><rect x="7" y="7" width="7" height="6.5" fill="#666"/><path d="M8 4 H12 L13 2 M12 4 L13 6 M10 1 Q13 1 13 4" stroke="#222" stroke-width="1" fill="none"/></svg>
<div class="t" style="left:1350px;top:956.5px;font-size:11px;color:#111">Без Замены</div>
<svg style="left:1435px;top:958px" width="6" height="9"><path d="M0 0 L4.5 4 L0 8 Z" fill="#111"/></svg>
<div class="a" style="left:1446px;top:953px;width:1px;height:18px;background:#9a9a9a"></div>
<svg style="left:1453px;top:954px" width="16" height="16"><path d="M1 14.5 L7 1 L9 6 H15 V14.5 Z M10 14.5 V10 H13 V14.5" stroke="#222" stroke-width="1.1" fill="none"/></svg>
<div class="t" style="left:1477px;top:956.5px;font-size:11px;color:#111">00 Показать Все Э...</div>
<svg style="left:1584px;top:958px" width="6" height="9"><path d="M0 0 L4.5 4 L0 8 Z" fill="#111"/></svg>
<div class="a" style="left:1595px;top:953px;width:1px;height:18px;background:#9a9a9a"></div>
<svg style="left:1602px;top:955px" width="14" height="14"><path d="M0.7 4 L4 0.7 H13 V9.5 L9.5 13 H0.7 Z M0.7 4 H9.5 V13 M9.5 4 L13 0.7" stroke="#222" stroke-width="1.2" fill="none"/></svg>
<div class="t" style="left:1625px;top:956.2px;font-size:11.6px;color:#111">Упрощенная Окр...</div>
<svg style="left:1731px;top:958px" width="6" height="9"><path d="M0 0 L4.5 4 L0 8 Z" fill="#111"/></svg>
<div class="a" style="left:145px;top:984px;width:1px;height:14px;background:#777"></div>
<svg style="left:156px;top:982px" width="20" height="18"><path d="M1 5 Q6 -1 11 5 Q6 11 1 5 Z" stroke="#222" stroke-width="1.2" fill="none"/><circle cx="6" cy="5" r="1.8" fill="#222"/><path d="M1 14 Q6 8 11 14 Q6 20 1 14 Z M0 18 L12 10" stroke="#222" stroke-width="1.2" fill="none"/><path d="M14 4 Q18 6 17 10 Q16 13 13 14 M15 2 L13.5 4.5 L16 5.5" stroke="#222" stroke-width="1.1" fill="none"/></svg>
<svg style="left:185px;top:980px" width="22" height="20"><rect x="0.7" y="9" width="8" height="8" rx="2" stroke="#222" stroke-width="1.2" fill="none"/><path d="M2.5 9 V6.5 Q4.7 3.5 7 6.5 V9 M4.7 12 V14" stroke="#222" stroke-width="1.2" fill="none"/><path d="M11 3 V6 M11 6 H19 V11 Q15 15 11 11 Z M13 3 Q13 0 15.5 0.7 M15 8 V10" stroke="#222" stroke-width="1.2" fill="none"/><path d="M12 17 Q15 18.5 17 15.5 M17 15.5 L15.5 15.5 M17 15.5 L17.5 17" stroke="#222" stroke-width="1" fill="none"/></svg>
<div class="a" style="left:212px;top:976px;width:1px;height:29px;background:#888"></div>
<div class="a" style="left:213px;top:976px;width:93px;height:14px;overflow:hidden"><div class="t s" style="left:2px;top:4px">Слои Выбр.Эл-ов</div></div>
<svg style="left:222px;top:992px" width="16" height="13"><path d="M1 6 Q8 0 15 6 Q8 12 1 6 Z M2 11 L14 1" stroke="#a8a8a8" stroke-width="1.2" fill="none"/></svg>
<svg style="left:257px;top:992px" width="8" height="12"><rect x="0.7" y="5" width="6" height="6" rx="1.5" stroke="#a8a8a8" fill="none"/><path d="M2 5 V3 Q3.7 0.5 5.4 3 V5" stroke="#a8a8a8" fill="none"/></svg>
<svg style="left:284px;top:992px" width="12" height="12"><rect x="3.7" y="5" width="6" height="6" rx="1.5" stroke="#a8a8a8" fill="none"/><path d="M1 4 Q2 0.5 4.5 2" stroke="#a8a8a8" fill="none"/></svg>
<div class="a" style="left:307px;top:976px;width:1px;height:29px;background:#888"></div>
<div class="t s" style="left:310px;top:980px">Всех Слоев:</div>
<svg style="left:317px;top:992px" width="16" height="13"><path d="M1 6 Q8 0 15 6 Q8 12 1 6 Z M2 11 L14 1" stroke="#222" stroke-width="1.3" fill="none"/></svg>
<svg style="left:351px;top:992px" width="8" height="12"><rect x="0.7" y="5" width="6" height="6" rx="1.5" stroke="#222" stroke-width="1.2" fill="none"/><path d="M2 5 V3 Q3.7 0.5 5.4 3 V5" stroke="#222" stroke-width="1.2" fill="none"/></svg>
<div class="a" style="left:402px;top:976px;width:1px;height:29px;background:#888"></div>
<svg style="left:414px;top:979px" width="13" height="25"><path d="M1.5 7 Q1.5 2 6 2 Q10 2 11 6 M11 6 L9 5 M11 6 L12 4 M11.5 18 Q11.5 23 7 23 Q3 23 2 19 M2 19 L4 20 M2 19 L1 21" stroke="#a8a8a8" stroke-width="1.1" fill="none"/></svg>
<div class="a" style="left:475px;top:984px;width:1px;height:14px;background:#777"></div>
<div class="a" style="left:478px;top:977px;width:79px;height:28px;background:#cce4f7;border:1px solid #b5d5f0;border-radius:3px"></div>
<svg style="left:482px;top:982px" width="19" height="19"><rect x="0.7" y="0.7" width="17" height="17" stroke="#222" stroke-width="1.3" fill="none"/><path d="M0.7 3 H17.7" stroke="#222" stroke-width="1.5"/><path d="M4 15 V8 L7 5 H14 V12 L11 15 Z M4 8 H11 V15 M11 8 L14 5" stroke="#222" stroke-width="1.2" fill="none"/></svg>
<div class="t" style="left:504px;top:985px;font-size:11.5px">3D-окно</div>
<div class="a" style="left:559px;top:976px;width:1px;height:29px;background:#888"></div>
<div class="a" style="left:565px;top:977px;width:29px;height:28px;background:#cce4f7;border:1px solid #b5d5f0;border-radius:3px"></div>
<svg style="left:570px;top:983px" width="17" height="18"><path d="M0.5 2.3 L11.5 0.5 V16.3 L0.5 13.7 Z M11.5 0.5 L15.3 2.3 V13.4 L11.5 16.3" stroke="#1e3346" stroke-width="1.3" fill="none" stroke-linejoin="round"/></svg>
<svg style="left:598px;top:982px" width="17" height="18"><path d="M0.5 4 L4.5 0.5 L15.6 2.5 L11.5 6.3 Z M0.5 4 V14.5 L11.5 17 V6.3 M15.6 2.5 V12.5 L11.5 17" stroke="#222" stroke-width="1.2" fill="none" stroke-linejoin="round"/></svg>
<svg style="left:630px;top:981px" width="20" height="20"><path d="M9 1 V10 L2 15 M9 10 L17 15 M7 3 L9 1 L11 3 M3 13 L1 16 L4 17 M15 13 L18 16 L15 17" stroke="#222" stroke-width="1.1" fill="none"/><path d="M5 8 L9 6 L13 8 L9 10 Z" stroke="#222" fill="none"/></svg>
<svg style="left:661px;top:988px" width="8" height="5"><path d="M0 0 H7 L3.5 4 Z" fill="#222"/></svg>
<div class="a" style="left:676px;top:984px;width:1px;height:14px;background:#777"></div>
<svg style="left:690px;top:981px" width="12" height="19"><circle cx="6" cy="2.5" r="2" stroke="#222" fill="none"/><path d="M6 5 L5 11 L2 17.5 M5 11 L9 17.5 M1.5 9 L4.5 6 L8.5 7.5 L10.5 10" stroke="#222" stroke-width="1.2" fill="none"/></svg>
<div class="a" style="left:710px;top:977px;width:29px;height:28px;background:#cce4f7;border:1px solid #b5d5f0;border-radius:3px"></div>
<svg style="left:714px;top:982px" width="20" height="19"><path d="M3 10 L8 4 L16 6 L12 12 Z M3 10 L3 12 L12 14 L12 12 M12 14 L16 8 V6" stroke="#1f3f6a" stroke-width="1.2" fill="none"/><path d="M1 11 Q0 16 8 17 Q17 17 18 11 M7 15.5 L5 17 L7 18.5" stroke="#3a6ad8" stroke-width="1.3" fill="none"/></svg>
<div class="a" style="left:742px;top:984px;width:1px;height:14px;background:#777"></div>
<svg style="left:750px;top:981px" width="19" height="19"><circle cx="9" cy="9" r="6.5" stroke="#222" stroke-width="1.2" fill="none"/><path d="M9 0 V18 M0 9 H18" stroke="#222" stroke-width="1.2"/><circle cx="9" cy="9" r="2.5" stroke="#222" fill="none"/></svg>
<svg style="left:779px;top:981px" width="19" height="19"><path d="M0.7 5 V0.7 H5 M13 0.7 H17.3 V5 M17.3 13 V17.3 H13 M5 17.3 H0.7 V13" stroke="#222" stroke-width="1.2" fill="none"/><path d="M3.5 8 L9 3 L14.5 8 V15 H3.5 Z M7 15 V10.5 H11 V15" stroke="#222" stroke-width="1.2" fill="none"/></svg>
<svg style="left:808px;top:981px" width="19" height="19"><rect x="5" y="1" width="8" height="7" stroke="#222" stroke-width="1.2" fill="none"/><circle cx="9" cy="4.5" r="1.5" fill="#222"/><path d="M9 8 V12 L4 17 M9 12 L14 17 M0 5 H4 M14 5 H18" stroke="#222" stroke-width="1.2" fill="none"/></svg>
<svg style="left:837px;top:981px" width="19" height="19"><path d="M2 11 L9 5 L16 11 V16 H2 Z M2 11 V16 M9 5 V9" stroke="#222" stroke-width="1.2" fill="none"/><path d="M3 1 L7 4 M15 1 L11 4 M4 4 H7 V1 M14 4 H11 V1" stroke="#3a6ad8" stroke-width="1.1" fill="none"/></svg>
<svg style="left:866px;top:981px" width="19" height="19"><path d="M5 2 Q9 0 13 2 V13 Q9 16 5 13 Z M0 9 H5 M13 9 H18 M1.5 7.5 L0 9 L1.5 10.5 M16.5 7.5 L18 9 L16.5 10.5" stroke="#999" stroke-width="1.1" fill="none"/></svg>
<div class="a" style="left:895px;top:984px;width:1px;height:14px;background:#777"></div>
<svg style="left:907px;top:981px" width="19" height="19"><path d="M1 6 L5 2 H11 V11 L8 14 H1 Z M1 6 H8 V14 M8 6 L11 2" stroke="#222" stroke-width="1.1" fill="#fff"/><rect x="8" y="8" width="10" height="9" stroke="#3a6ad8" stroke-width="1.2" fill="#e8f0fb"/><path d="M8 10.5 H18 M10 13 H16 M10 15 H16" stroke="#3a6ad8"/></svg>
<svg style="left:938px;top:988px" width="8" height="5"><path d="M0 0 H7 L3.5 4 Z" fill="#222"/></svg>
<div class="a" style="left:952px;top:984px;width:1px;height:14px;background:#777"></div>
<svg style="left:965px;top:981px" width="19" height="19"><path d="M1 4 L4 1 H9 V6" stroke="#bbb" fill="none"/><rect x="4" y="7" width="10" height="9" stroke="#222" stroke-width="1.3" stroke-dasharray="2 1" fill="none"/><rect x="3" y="6" width="3" height="3" fill="#222"/><rect x="12" y="6" width="3" height="3" fill="#222"/><rect x="3" y="14" width="3" height="3" fill="#222"/><rect x="12" y="14" width="3" height="3" fill="#222"/></svg>
<svg style="left:997px;top:988px" width="8" height="5"><path d="M0 0 H7 L3.5 4 Z" fill="#222"/></svg>
<svg style="left:1010px;top:981px" width="19" height="19"><path d="M1 8 L6 2 L11 8 V15 H1 Z M6 2 L10 0 L15 6 L11 8" stroke="#222" stroke-width="1.2" fill="none"/><path d="M10 11 H18 L15 14.5 V18 L13 17 V14.5 Z" stroke="#3a6ad8" stroke-width="1.1" fill="#e8f0fb"/></svg>
<svg style="left:1044px;top:981px" width="20" height="19"><path d="M1 10 L8 3 L18 5 L12 13 Z M1 10 L1 12 L12 15 V13 M12 15 L18 7 V5" stroke="#222" stroke-width="1.2" fill="none"/><path d="M4 8 L9 1 L17 4 L13 11 Z" stroke="#3a6ad8" stroke-width="1.2" fill="none"/></svg>
<svg style="left:1076px;top:988px" width="8" height="5"><path d="M0 0 H7 L3.5 4 Z" fill="#222"/></svg>
<div class="a" style="left:1090px;top:984px;width:1px;height:14px;background:#777"></div>
<svg style="left:1098px;top:981px" width="18" height="19"><path d="M7 1 H10 V8 H13 V11 Q14 14 15 17 H2 Q3 14 4 11 V8 H7 Z M4 11 H13 M2 17 L1 19 M5 14 L4 17 M8 14 L7 17 M11 14 L10 17" stroke="#222" stroke-width="1.2" fill="none"/></svg>
<svg style="left:1127px;top:981px" width="18" height="19"><path d="M3 1 Q0 6 3 7 Q6 6 3 1 Z" stroke="#222" fill="none"/><path d="M10 2 H13 V8 H15 V11 Q16 14 17 17 H7 Q8 14 8.5 11 V8 H10 Z M0 18 H17" stroke="#222" stroke-width="1.2" fill="none"/></svg>
<div class="a" style="left:1155px;top:984px;width:1px;height:14px;background:#777"></div>
<svg style="left:1168px;top:982px" width="20" height="17"><path d="M1 4 H5 L7 1 H13 L15 4 H19 V16 H1 Z" stroke="#222" stroke-width="1.2" fill="none"/><circle cx="10" cy="9.5" r="4" stroke="#222" stroke-width="1.2" fill="none"/></svg>
<svg style="left:1200px;top:988px" width="8" height="5"><path d="M0 0 H7 L3.5 4 Z" fill="#222"/></svg>
<svg style="left:1214px;top:981px" width="19" height="19"><path d="M1 4 H4 L6 1 H11 L13 4 H15 V12 H1 Z" stroke="#222" stroke-width="1.2" fill="none"/><circle cx="8" cy="8" r="3" stroke="#222" fill="none"/><rect x="8" y="9" width="10" height="9" stroke="#3a6ad8" stroke-width="1.2" fill="#e8f0fb"/><path d="M8 11.5 H18 M10 14 H16 M10 16 H16" stroke="#3a6ad8"/></svg>
<svg style="left:1243px;top:981px" width="19" height="19"><path d="M3 8 L9 3 L15 8 V16 H3 Z M7 16 V11 H11 V16" stroke="#4a6aa8" stroke-width="1.2" fill="none"/><path d="M9 0 V3 M3 0 V3 M15 0 V3 M0 12 L3 10 M18 12 L15 10 M3 18 V16 M15 18 V16" stroke="#3a6ad8" stroke-dasharray="1.5 1" fill="none"/></svg>
<div class="a" style="left:1271px;top:984px;width:1px;height:14px;background:#777"></div>
<svg style="left:1281px;top:982px" width="18" height="17"><rect x="1" y="3" width="10" height="9" rx="1.5" stroke="#222" stroke-width="1.2" fill="none"/><path d="M11 6 L16 3 V12 L11 9" stroke="#222" stroke-width="1.2" fill="none"/><path d="M0 16 Q4 14 7 15" stroke="#3a6ad8" fill="none"/></svg>
<svg style="left:1309px;top:980px" width="19" height="20"><path d="M5 0 V7 M1.5 3.5 H8.5 M2.5 1 L7.5 6 M7.5 1 L2.5 6" stroke="#222" stroke-width="1.1"/><path d="M6 11 L11 6 L16 11 V17 H6 Z M11 17 V12" stroke="#222" stroke-width="1.2" fill="#fff"/><path d="M7 18 H18 V12" stroke="#999" stroke-width="2" fill="none"/></svg>
<div class="t" style="left:4px;top:1016px;font-size:11.88px">Щелкните на элементе или начертите область выбора. Нажмите и не отпускайте Ctrl+Shift для переключения выбора элемента/подэлемента.</div>
<svg style="left:1745px;top:1014px" width="18" height="15"><rect x="0.7" y="0.7" width="12" height="9" stroke="#222" stroke-width="1.3" fill="none"/><rect x="3.7" y="4" width="12.5" height="9.5" stroke="#222" stroke-width="1.5" fill="#f0f0f0"/></svg>
<div class="a" style="left:1767px;top:1011px;width:1px;height:19px;background:#d4d4d4"></div>
<div class="t" style="left:1783px;top:1015px;font-size:13px;color:#8c8c8c;letter-spacing:-0.2px">GRAPHISOFT ID</div>
<div class="a" style="left:1896px;top:1011px;width:1px;height:19px;background:#d4d4d4"></div>
<svg style="left:0;top:0" width="1920" height="1032"><polygon points="533.0,644.0 612.0,643.0 612.0,790.0 533.0,772.0" fill="#a6a6a6" /><polygon points="533.0,646.0 612.0,646.0 612.0,683.0 533.0,683.0" fill="#b3b3b3" /><line x1="535.0" y1="647.0" x2="535.0" y2="683.0" stroke="#a0a0a0" stroke-width="1.2"/><line x1="551.0" y1="647.0" x2="551.0" y2="683.0" stroke="#a0a0a0" stroke-width="1.2"/><line x1="569.0" y1="647.0" x2="569.0" y2="683.0" stroke="#a0a0a0" stroke-width="1.2"/><line x1="576.0" y1="647.0" x2="576.0" y2="683.0" stroke="#a0a0a0" stroke-width="1.2"/><line x1="583.0" y1="647.0" x2="583.0" y2="683.0" stroke="#a0a0a0" stroke-width="1.2"/><line x1="602.0" y1="647.0" x2="602.0" y2="683.0" stroke="#a0a0a0" stroke-width="1.2"/><line x1="608.0" y1="647.0" x2="608.0" y2="683.0" stroke="#a0a0a0" stroke-width="1.2"/><line x1="533.0" y1="663.5" x2="612.0" y2="663.5" stroke="#c2c2c2" stroke-width="1.5"/><polygon points="560.0,680.0 612.0,679.0 612.0,683.0 560.0,683.0" fill="#6a6a6a" /><polygon points="551.0,693.0 568.0,693.0 568.0,703.0 551.0,705.0" fill="#3a3a3a" /><polygon points="575.0,705.0 593.0,715.0 593.0,723.0 575.0,721.0" fill="#444444" /><polygon points="575.0,705.0 593.0,721.0 575.0,721.0" fill="#3d3d3d" /><polygon points="551.0,728.0 568.0,728.0 568.0,738.0 551.0,740.0" fill="#3a3a3a" /><polygon points="575.0,740.0 593.0,750.0 593.0,758.0 575.0,756.0" fill="#444444" /><polygon points="575.0,740.0 593.0,756.0 575.0,756.0" fill="#3d3d3d" /><polygon points="560.0,765.0 612.0,770.0 612.0,790.0 560.0,782.0" fill="#4e4e4e" /><line x1="533.0" y1="724.0" x2="612.0" y2="726.0" stroke="#b4b4b4" stroke-width="2"/><line x1="533.0" y1="757.0" x2="541.0" y2="757.0" stroke="#111" stroke-width="1.5"/><line x1="533.0" y1="757.0" x2="533.0" y2="764.0" stroke="#111" stroke-width="1.5"/><polygon points="524.0,631.0 613.0,630.0 613.0,646.0 524.0,646.0" fill="#a9a9a9" /><line x1="524.0" y1="644.0" x2="613.0" y2="644.0" stroke="#9a9a9a" stroke-width="1"/><polygon points="475.0,684.0 612.0,686.0 612.0,692.0 475.0,691.0" fill="#a9a9a9" /><polygon points="475.0,691.0 483.0,691.0 483.0,763.0 475.0,763.0" fill="#acacac" /><polygon points="496.0,691.0 505.0,691.0 505.0,766.0 496.0,766.0" fill="#acacac" /><polygon points="510.0,691.0 518.0,691.0 518.0,760.0 510.0,760.0" fill="#acacac" /><polygon points="518.0,691.0 526.0,691.0 526.0,767.0 518.0,767.0" fill="#acacac" /><polygon points="541.0,691.0 549.0,691.0 549.0,770.0 541.0,770.0" fill="#acacac" /><polygon points="566.0,691.0 574.0,691.0 574.0,773.0 566.0,773.0" fill="#acacac" /><polygon points="592.0,691.0 600.0,691.0 600.0,776.0 592.0,776.0" fill="#acacac" /><text x="534" y="737" font-size="9" font-family="Liberation Sans" fill="#222">z</text><text x="549" y="762" font-size="9" font-family="Liberation Sans" fill="#222">y</text><text x="542" y="764" font-size="8" font-family="Liberation Sans" fill="#222">x</text><polygon points="600.0,752.0 608.0,752.0 608.0,770.0 600.0,770.0" fill="#c98a55" /><polygon points="612.0,600.0 850.0,585.0 850.0,818.0 612.0,790.0" fill="#a9a9a9" /><polygon points="612.0,602.0 850.0,592.0 850.0,646.0 612.0,643.0" fill="#b4b4b4" /><polygon points="700.0,594.5 850.0,585.0 850.0,607.0 700.0,605.1" fill="#5d5d5d" /><polygon points="612.0,600.0 700.0,594.5 700.0,601.9 612.0,603.0" fill="#6a6a6a" /><polygon points="612.0,603.0 850.0,606.0 850.0,624.0 612.0,622.0" fill="#bcbcbc" /><polygon points="612.0,622.0 850.0,624.0 850.0,646.0 612.0,643.0" fill="#adadad" /><line x1="619.0" y1="606.1" x2="619.0" y2="643.1" stroke="#a2a2a2" stroke-width="1"/><line x1="627.0" y1="606.1" x2="627.0" y2="643.2" stroke="#a2a2a2" stroke-width="1"/><line x1="641.0" y1="606.2" x2="641.0" y2="643.4" stroke="#a2a2a2" stroke-width="1"/><line x1="655.0" y1="606.4" x2="655.0" y2="643.5" stroke="#a2a2a2" stroke-width="1"/><line x1="686.0" y1="606.6" x2="686.0" y2="643.9" stroke="#a2a2a2" stroke-width="1"/><line x1="706.0" y1="606.8" x2="706.0" y2="644.2" stroke="#a2a2a2" stroke-width="1"/><line x1="718.0" y1="606.9" x2="718.0" y2="644.3" stroke="#a2a2a2" stroke-width="1"/><line x1="740.0" y1="607.1" x2="740.0" y2="644.6" stroke="#a2a2a2" stroke-width="1"/><line x1="770.0" y1="607.3" x2="770.0" y2="645.0" stroke="#a2a2a2" stroke-width="1"/><line x1="800.0" y1="607.6" x2="800.0" y2="645.4" stroke="#a2a2a2" stroke-width="1"/><line x1="835.0" y1="607.9" x2="835.0" y2="645.8" stroke="#a2a2a2" stroke-width="1"/><polygon points="693.0,672.7 850.0,674.0 850.0,703.0 693.0,699.0" fill="#676767" /><polygon points="745.0,705.8 850.0,708.0 850.0,760.0 745.0,754.7" fill="#676767" /><polygon points="700.0,723.7 745.0,725.6 745.0,754.7 700.0,752.4" fill="#676767" /><polygon points="693.0,756.1 850.0,764.0 850.0,818.0 693.0,804.1" fill="#676767" /><polygon points="700.0,646.4 850.0,647.0 850.0,674.0 700.0,672.7" fill="#a6a6a6" /><polygon points="648.0,649.0 664.0,649.0 664.0,665.0" fill="#353535" /><polygon points="664.0,663.0 692.0,662.0 692.0,669.0 664.0,671.0" fill="#3a3a3a" /><polygon points="692.0,669.0 664.0,670.0 664.0,691.0" fill="#3d3d3d" /><line x1="666.0" y1="652.0" x2="666.0" y2="661.0" stroke="#c4c4c4" stroke-width="1"/><line x1="671.0" y1="652.0" x2="671.0" y2="661.0" stroke="#c4c4c4" stroke-width="1"/><line x1="676.0" y1="652.0" x2="676.0" y2="661.0" stroke="#c4c4c4" stroke-width="1"/><line x1="681.0" y1="652.0" x2="681.0" y2="661.0" stroke="#c4c4c4" stroke-width="1"/><line x1="686.0" y1="652.0" x2="686.0" y2="661.0" stroke="#c4c4c4" stroke-width="1"/><line x1="664.0" y1="651.0" x2="692.0" y2="651.0" stroke="#c0c0c0" stroke-width="1"/><polygon points="643.0,698.0 664.0,698.0 664.0,714.0" fill="#353535" /><polygon points="664.0,712.0 692.0,711.0 692.0,718.0 664.0,720.0" fill="#3a3a3a" /><polygon points="692.0,718.0 664.0,719.0 664.0,740.0" fill="#3d3d3d" /><line x1="666.0" y1="701.0" x2="666.0" y2="710.0" stroke="#c4c4c4" stroke-width="1"/><line x1="671.0" y1="701.0" x2="671.0" y2="710.0" stroke="#c4c4c4" stroke-width="1"/><line x1="676.0" y1="701.0" x2="676.0" y2="710.0" stroke="#c4c4c4" stroke-width="1"/><line x1="681.0" y1="701.0" x2="681.0" y2="710.0" stroke="#c4c4c4" stroke-width="1"/><line x1="686.0" y1="701.0" x2="686.0" y2="710.0" stroke="#c4c4c4" stroke-width="1"/><line x1="664.0" y1="700.0" x2="692.0" y2="700.0" stroke="#c0c0c0" stroke-width="1"/><polygon points="640.0,748.0 664.0,748.0 664.0,764.0" fill="#353535" /><polygon points="664.0,762.0 692.0,761.0 692.0,768.0 664.0,770.0" fill="#3a3a3a" /><polygon points="692.0,768.0 664.0,769.0 664.0,790.0" fill="#3d3d3d" /><line x1="666.0" y1="751.0" x2="666.0" y2="760.0" stroke="#c4c4c4" stroke-width="1"/><line x1="671.0" y1="751.0" x2="671.0" y2="760.0" stroke="#c4c4c4" stroke-width="1"/><line x1="676.0" y1="751.0" x2="676.0" y2="760.0" stroke="#c4c4c4" stroke-width="1"/><line x1="681.0" y1="751.0" x2="681.0" y2="760.0" stroke="#c4c4c4" stroke-width="1"/><line x1="686.0" y1="751.0" x2="686.0" y2="760.0" stroke="#c4c4c4" stroke-width="1"/><line x1="664.0" y1="750.0" x2="692.0" y2="750.0" stroke="#c0c0c0" stroke-width="1"/><polygon points="612.0,780.0 850.0,806.0 850.0,818.0 612.0,790.0" fill="#464646" /><line x1="612.0" y1="644.0" x2="850.0" y2="646.0" stroke="#b8b8b8" stroke-width="4"/><line x1="612.0" y1="672.0" x2="850.0" y2="674.0" stroke="#bdbdbd" stroke-width="1.5"/><line x1="612.0" y1="697.0" x2="850.0" y2="702.0" stroke="#b8b8b8" stroke-width="5"/><line x1="612.0" y1="722.0" x2="850.0" y2="731.0" stroke="#bdbdbd" stroke-width="1.5"/><line x1="612.0" y1="748.0" x2="850.0" y2="759.0" stroke="#b8b8b8" stroke-width="6"/><line x1="612.0" y1="776.0" x2="850.0" y2="792.0" stroke="#bdbdbd" stroke-width="1.5"/><line x1="614.0" y1="599.9" x2="614.0" y2="790.2" stroke="#b8b8b8" stroke-width="2.2"/><line x1="636.0" y1="598.5" x2="636.0" y2="792.8" stroke="#b8b8b8" stroke-width="2.2"/><line x1="663.0" y1="596.8" x2="663.0" y2="796.0" stroke="#b8b8b8" stroke-width="2.2"/><line x1="693.0" y1="594.9" x2="693.0" y2="799.5" stroke="#b8b8b8" stroke-width="2.2"/><line x1="724.0" y1="592.9" x2="724.0" y2="803.2" stroke="#b8b8b8" stroke-width="2.2"/><line x1="755.0" y1="591.0" x2="755.0" y2="806.8" stroke="#b8b8b8" stroke-width="2.2"/><line x1="789.0" y1="588.8" x2="789.0" y2="810.8" stroke="#b8b8b8" stroke-width="2.2"/><line x1="825.0" y1="586.6" x2="825.0" y2="815.1" stroke="#b8b8b8" stroke-width="2.2"/><polygon points="614.0,581.0 900.0,563.0 900.0,586.0 850.0,585.0 614.0,600.0" fill="#a6a6a6" /><polygon points="608.0,597.0 614.0,597.0 614.0,604.0 608.0,604.0" fill="#aaaaaa" /><polygon points="850.0,585.0 900.0,586.0 900.0,829.0 850.0,824.0" fill="#b9b9b9" /><line x1="851.0" y1="590.0" x2="899.0" y2="590.3" stroke="#a9a9a9" stroke-width="1.2"/><line x1="851.0" y1="598.0" x2="899.0" y2="598.3" stroke="#a9a9a9" stroke-width="1.2"/><line x1="851.0" y1="606.0" x2="899.0" y2="606.3" stroke="#a9a9a9" stroke-width="1.2"/><line x1="851.0" y1="614.0" x2="899.0" y2="614.3" stroke="#a9a9a9" stroke-width="1.2"/><line x1="851.0" y1="622.0" x2="899.0" y2="622.3" stroke="#a9a9a9" stroke-width="1.2"/><line x1="851.0" y1="630.0" x2="899.0" y2="630.3" stroke="#a9a9a9" stroke-width="1.2"/><line x1="851.0" y1="638.0" x2="899.0" y2="638.3" stroke="#a9a9a9" stroke-width="1.2"/><line x1="851.0" y1="646.0" x2="899.0" y2="646.3" stroke="#a9a9a9" stroke-width="1.2"/><line x1="851.0" y1="654.0" x2="899.0" y2="654.3" stroke="#a9a9a9" stroke-width="1.2"/><line x1="851.0" y1="662.0" x2="899.0" y2="662.3" stroke="#a9a9a9" stroke-width="1.2"/><line x1="851.0" y1="670.0" x2="899.0" y2="670.3" stroke="#a9a9a9" stroke-width="1.2"/><line x1="851.0" y1="678.0" x2="899.0" y2="678.3" stroke="#a9a9a9" stroke-width="1.2"/><line x1="851.0" y1="686.0" x2="899.0" y2="686.3" stroke="#a9a9a9" stroke-width="1.2"/><line x1="851.0" y1="694.0" x2="899.0" y2="694.3" stroke="#a9a9a9" stroke-width="1.2"/><line x1="851.0" y1="702.0" x2="899.0" y2="702.3" stroke="#a9a9a9" stroke-width="1.2"/><line x1="851.0" y1="710.0" x2="899.0" y2="710.3" stroke="#a9a9a9" stroke-width="1.2"/><line x1="851.0" y1="718.0" x2="899.0" y2="718.3" stroke="#a9a9a9" stroke-width="1.2"/><line x1="851.0" y1="726.0" x2="899.0" y2="726.3" stroke="#a9a9a9" stroke-width="1.2"/><line x1="851.0" y1="734.0" x2="899.0" y2="734.3" stroke="#a9a9a9" stroke-width="1.2"/><line x1="851.0" y1="742.0" x2="899.0" y2="742.3" stroke="#a9a9a9" stroke-width="1.2"/><line x1="851.0" y1="750.0" x2="899.0" y2="750.3" stroke="#a9a9a9" stroke-width="1.2"/><line x1="851.0" y1="758.0" x2="899.0" y2="758.3" stroke="#a9a9a9" stroke-width="1.2"/><line x1="851.0" y1="766.0" x2="899.0" y2="766.3" stroke="#a9a9a9" stroke-width="1.2"/><line x1="851.0" y1="774.0" x2="899.0" y2="774.3" stroke="#a9a9a9" stroke-width="1.2"/><line x1="851.0" y1="782.0" x2="899.0" y2="782.3" stroke="#a9a9a9" stroke-width="1.2"/><line x1="851.0" y1="790.0" x2="899.0" y2="790.3" stroke="#a9a9a9" stroke-width="1.2"/><line x1="851.0" y1="798.0" x2="899.0" y2="798.3" stroke="#a9a9a9" stroke-width="1.2"/><line x1="851.0" y1="806.0" x2="899.0" y2="806.3" stroke="#a9a9a9" stroke-width="1.2"/><line x1="851.0" y1="814.0" x2="899.0" y2="814.3" stroke="#a9a9a9" stroke-width="1.2"/><line x1="900.0" y1="586.0" x2="900.0" y2="829.0" stroke="#9c9c9c" stroke-width="1"/><polygon points="937.0,470.0 1109.0,449.0 1110.0,476.0 937.0,491.0" fill="#a9a9a9" /><polygon points="1109.0,449.0 1183.0,472.0 1183.0,494.0 1110.0,476.0" fill="#bfbfbf" /><polygon points="937.0,491.0 1110.0,476.0 1110.0,570.0 937.0,569.0" fill="#5a5a5a" /><line x1="937.0" y1="495.0" x2="1110.0" y2="478.0" stroke="#b0b0b0" stroke-width="1.3"/><line x1="937.0" y1="514.0" x2="1110.0" y2="500.0" stroke="#b0b0b0" stroke-width="1.3"/><line x1="937.0" y1="532.0" x2="1110.0" y2="520.0" stroke="#b0b0b0" stroke-width="1.3"/><line x1="937.0" y1="551.0" x2="1110.0" y2="540.0" stroke="#b0b0b0" stroke-width="1.3"/><line x1="938.0" y1="490.9" x2="938.0" y2="569.0" stroke="#b4b4b4" stroke-width="1.4"/><line x1="941.0" y1="490.7" x2="941.0" y2="569.0" stroke="#b4b4b4" stroke-width="1.4"/><line x1="972.0" y1="488.0" x2="972.0" y2="569.2" stroke="#b4b4b4" stroke-width="1.4"/><line x1="1005.0" y1="485.1" x2="1005.0" y2="569.4" stroke="#b4b4b4" stroke-width="1.4"/><line x1="1039.0" y1="482.2" x2="1039.0" y2="569.6" stroke="#b4b4b4" stroke-width="1.4"/><line x1="1074.0" y1="479.1" x2="1074.0" y2="569.8" stroke="#b4b4b4" stroke-width="1.4"/><polygon points="1110.0,476.0 1183.0,494.0 1183.0,579.0 1110.0,570.0" fill="#6a6a6a" /><line x1="1110.0" y1="478.0" x2="1183.0" y2="497.0" stroke="#b4b4b4" stroke-width="1.3"/><line x1="1110.0" y1="500.0" x2="1183.0" y2="516.0" stroke="#b4b4b4" stroke-width="1.3"/><line x1="1110.0" y1="520.0" x2="1183.0" y2="534.0" stroke="#b4b4b4" stroke-width="1.3"/><line x1="1110.0" y1="540.0" x2="1183.0" y2="553.0" stroke="#b4b4b4" stroke-width="1.3"/><line x1="1110.0" y1="561.0" x2="1183.0" y2="572.0" stroke="#b4b4b4" stroke-width="1.3"/><line x1="1110.0" y1="476.0" x2="1110.0" y2="570.0" stroke="#b8b8b8" stroke-width="1.4"/><line x1="1118.0" y1="478.0" x2="1118.0" y2="571.0" stroke="#b8b8b8" stroke-width="1.4"/><line x1="1136.0" y1="482.4" x2="1136.0" y2="573.2" stroke="#b8b8b8" stroke-width="1.4"/><line x1="1153.0" y1="486.6" x2="1153.0" y2="575.3" stroke="#b8b8b8" stroke-width="1.4"/><line x1="1169.0" y1="490.5" x2="1169.0" y2="577.3" stroke="#b8b8b8" stroke-width="1.4"/><line x1="1182.0" y1="493.8" x2="1182.0" y2="578.9" stroke="#b8b8b8" stroke-width="1.4"/><polygon points="899.0,564.0 937.0,566.0 1110.0,570.0 1183.0,580.0 1337.0,598.0 1337.0,612.0 1190.0,610.0 1074.0,592.0 977.0,590.0 900.0,590.0" fill="#bdbdbd" /><polygon points="899.0,564.0 937.0,566.0 975.0,572.0 960.0,592.0 899.0,590.0" fill="#c2c2c2" /><polygon points="975.0,572.0 1074.0,567.0 1074.0,592.0 960.0,592.0" fill="#b6b6b6" /><polygon points="900.0,590.0 977.0,590.0 977.0,810.0 900.0,828.0" fill="#676767" /><polygon points="900.0,615.0 977.0,617.0 977.0,668.0 900.0,670.0" fill="#b0b0b0" /><polygon points="900.0,620.0 977.0,622.0 977.0,634.0 900.0,632.0" fill="#bdbdbd" /><polygon points="900.0,590.0 977.0,590.0 977.0,614.0 900.0,614.0" fill="#666666" /><line x1="900.0" y1="615.0" x2="977.0" y2="617.0" stroke="#b8b8b8" stroke-width="2"/><line x1="900.0" y1="645.0" x2="977.0" y2="645.0" stroke="#b8b8b8" stroke-width="4"/><line x1="900.0" y1="675.0" x2="977.0" y2="673.0" stroke="#b8b8b8" stroke-width="1.5"/><line x1="900.0" y1="703.0" x2="977.0" y2="698.0" stroke="#b8b8b8" stroke-width="5"/><line x1="900.0" y1="728.0" x2="977.0" y2="720.0" stroke="#b8b8b8" stroke-width="1.5"/><line x1="900.0" y1="757.0" x2="977.0" y2="745.0" stroke="#b8b8b8" stroke-width="5"/><line x1="900.0" y1="786.0" x2="977.0" y2="770.0" stroke="#b8b8b8" stroke-width="1.5"/><line x1="901.0" y1="590.0" x2="901.0" y2="827.8" stroke="#b8b8b8" stroke-width="2.2"/><line x1="926.0" y1="590.0" x2="926.0" y2="821.9" stroke="#b8b8b8" stroke-width="2.2"/><line x1="952.0" y1="590.0" x2="952.0" y2="815.8" stroke="#b8b8b8" stroke-width="2.2"/><line x1="976.0" y1="590.0" x2="976.0" y2="810.2" stroke="#b8b8b8" stroke-width="2.2"/><polygon points="977.0,590.0 1074.0,592.0 1074.0,822.0 977.0,809.0" fill="#676767" /><polygon points="977.0,614.0 1074.0,616.0 1074.0,645.0 977.0,642.0" fill="#a8a8a8" /><polygon points="977.0,645.0 1074.0,648.0 1074.0,677.0 977.0,673.0" fill="#adadad" /><polygon points="1024.0,674.9 1074.0,677.0 1074.0,822.0 1024.0,815.3" fill="#8c8c8c" /><line x1="982.0" y1="664.0" x2="1030.0" y2="649.0" stroke="#3d3d3d" stroke-width="6"/><line x1="1026.0" y1="676.0" x2="1066.0" y2="698.0" stroke="#3d3d3d" stroke-width="6"/><line x1="982.0" y1="723.0" x2="1036.0" y2="706.0" stroke="#3d3d3d" stroke-width="6"/><line x1="1026.0" y1="733.0" x2="1066.0" y2="755.0" stroke="#3d3d3d" stroke-width="6"/><line x1="982.0" y1="782.0" x2="1036.0" y2="766.0" stroke="#3d3d3d" stroke-width="6"/><line x1="1026.0" y1="793.0" x2="1070.0" y2="818.0" stroke="#3d3d3d" stroke-width="6"/><line x1="977.0" y1="614.0" x2="1074.0" y2="616.0" stroke="#b8b8b8" stroke-width="2"/><line x1="977.0" y1="642.0" x2="1074.0" y2="645.0" stroke="#b8b8b8" stroke-width="4"/><line x1="977.0" y1="673.0" x2="1074.0" y2="677.0" stroke="#b8b8b8" stroke-width="1.5"/><line x1="977.0" y1="701.0" x2="1074.0" y2="706.0" stroke="#b8b8b8" stroke-width="5"/><line x1="977.0" y1="730.0" x2="1074.0" y2="736.0" stroke="#b8b8b8" stroke-width="1.5"/><line x1="977.0" y1="758.0" x2="1074.0" y2="766.0" stroke="#b8b8b8" stroke-width="6"/><line x1="977.0" y1="788.0" x2="1074.0" y2="797.0" stroke="#b8b8b8" stroke-width="1.5"/><line x1="978.0" y1="590.0" x2="978.0" y2="809.1" stroke="#b8b8b8" stroke-width="2.5"/><line x1="1024.0" y1="591.0" x2="1024.0" y2="815.3" stroke="#b8b8b8" stroke-width="2.5"/><line x1="1073.0" y1="592.0" x2="1073.0" y2="821.9" stroke="#b8b8b8" stroke-width="2.5"/><polygon points="1074.0,592.0 1172.0,598.0 1172.0,796.0 1074.0,823.0" fill="#6b6b6b" /><polygon points="1074.0,614.0 1172.0,617.0 1172.0,645.0 1074.0,643.0" fill="#aaaaaa" /><polygon points="1074.0,645.0 1172.0,647.0 1172.0,671.0 1074.0,672.0" fill="#a6a6a6" /><line x1="1074.0" y1="614.0" x2="1172.0" y2="617.0" stroke="#b8b8b8" stroke-width="2"/><line x1="1074.0" y1="643.0" x2="1172.0" y2="645.0" stroke="#b8b8b8" stroke-width="4"/><line x1="1074.0" y1="672.0" x2="1172.0" y2="671.0" stroke="#b8b8b8" stroke-width="1.5"/><line x1="1074.0" y1="703.0" x2="1172.0" y2="698.0" stroke="#b8b8b8" stroke-width="5"/><line x1="1074.0" y1="733.0" x2="1172.0" y2="722.0" stroke="#b8b8b8" stroke-width="1.5"/><line x1="1074.0" y1="763.0" x2="1172.0" y2="748.0" stroke="#b8b8b8" stroke-width="6"/><line x1="1074.0" y1="792.0" x2="1172.0" y2="772.0" stroke="#b8b8b8" stroke-width="1.5"/><line x1="1076.0" y1="592.1" x2="1076.0" y2="822.4" stroke="#b8b8b8" stroke-width="2"/><line x1="1084.0" y1="592.6" x2="1084.0" y2="820.2" stroke="#b8b8b8" stroke-width="2"/><line x1="1093.0" y1="593.2" x2="1093.0" y2="817.8" stroke="#b8b8b8" stroke-width="2"/><line x1="1099.0" y1="593.5" x2="1099.0" y2="816.1" stroke="#b8b8b8" stroke-width="2"/><line x1="1107.0" y1="594.0" x2="1107.0" y2="813.9" stroke="#b8b8b8" stroke-width="2"/><line x1="1116.0" y1="594.6" x2="1116.0" y2="811.4" stroke="#b8b8b8" stroke-width="2"/><line x1="1136.0" y1="595.8" x2="1136.0" y2="805.9" stroke="#b8b8b8" stroke-width="2"/><line x1="1153.0" y1="596.8" x2="1153.0" y2="801.2" stroke="#b8b8b8" stroke-width="2"/><line x1="1170.0" y1="597.9" x2="1170.0" y2="796.6" stroke="#b8b8b8" stroke-width="2"/><polygon points="1172.0,596.0 1190.0,605.0 1190.0,790.0 1172.0,797.0" fill="#c1c1c1" /><line x1="1190.0" y1="605.0" x2="1190.0" y2="790.0" stroke="#a3a3a3" stroke-width="1"/><polygon points="1190.0,611.0 1340.0,613.0 1340.0,748.0 1190.0,790.0" fill="#c2c2c2" /><polygon points="1190.0,611.0 1340.0,611.0 1340.0,629.0 1190.0,630.0" fill="#adadad" /><polygon points="1190.0,655.0 1340.0,651.0 1340.0,661.0 1190.0,676.0" fill="#adadad" /><polygon points="1190.0,705.0 1340.0,686.0 1340.0,698.0 1190.0,725.0" fill="#adadad" /><polygon points="1190.0,749.0 1340.0,720.0 1340.0,735.0 1190.0,773.0" fill="#adadad" /><line x1="1195.0" y1="611.0" x2="1195.0" y2="630.0" stroke="#bdbdbd" stroke-width="1.2"/><line x1="1206.3" y1="611.0" x2="1206.3" y2="629.9" stroke="#bdbdbd" stroke-width="1.2"/><line x1="1217.6" y1="611.0" x2="1217.6" y2="629.8" stroke="#bdbdbd" stroke-width="1.2"/><line x1="1228.9" y1="611.0" x2="1228.9" y2="629.7" stroke="#bdbdbd" stroke-width="1.2"/><line x1="1240.2" y1="611.0" x2="1240.2" y2="629.7" stroke="#bdbdbd" stroke-width="1.2"/><line x1="1251.5" y1="611.0" x2="1251.5" y2="629.6" stroke="#bdbdbd" stroke-width="1.2"/><line x1="1262.8" y1="611.0" x2="1262.8" y2="629.5" stroke="#bdbdbd" stroke-width="1.2"/><line x1="1274.1" y1="611.0" x2="1274.1" y2="629.4" stroke="#bdbdbd" stroke-width="1.2"/><line x1="1285.4" y1="611.0" x2="1285.4" y2="629.4" stroke="#bdbdbd" stroke-width="1.2"/><line x1="1296.7" y1="611.0" x2="1296.7" y2="629.3" stroke="#bdbdbd" stroke-width="1.2"/><line x1="1308.0" y1="611.0" x2="1308.0" y2="629.2" stroke="#bdbdbd" stroke-width="1.2"/><line x1="1319.3" y1="611.0" x2="1319.3" y2="629.1" stroke="#bdbdbd" stroke-width="1.2"/><line x1="1330.6" y1="611.0" x2="1330.6" y2="629.1" stroke="#bdbdbd" stroke-width="1.2"/><line x1="1195.0" y1="654.9" x2="1195.0" y2="675.5" stroke="#bdbdbd" stroke-width="1.2"/><line x1="1206.3" y1="654.6" x2="1206.3" y2="674.4" stroke="#bdbdbd" stroke-width="1.2"/><line x1="1217.6" y1="654.3" x2="1217.6" y2="673.2" stroke="#bdbdbd" stroke-width="1.2"/><line x1="1228.9" y1="654.0" x2="1228.9" y2="672.1" stroke="#bdbdbd" stroke-width="1.2"/><line x1="1240.2" y1="653.7" x2="1240.2" y2="671.0" stroke="#bdbdbd" stroke-width="1.2"/><line x1="1251.5" y1="653.4" x2="1251.5" y2="669.9" stroke="#bdbdbd" stroke-width="1.2"/><line x1="1262.8" y1="653.1" x2="1262.8" y2="668.7" stroke="#bdbdbd" stroke-width="1.2"/><line x1="1274.1" y1="652.8" x2="1274.1" y2="667.6" stroke="#bdbdbd" stroke-width="1.2"/><line x1="1285.4" y1="652.5" x2="1285.4" y2="666.5" stroke="#bdbdbd" stroke-width="1.2"/><line x1="1296.7" y1="652.2" x2="1296.7" y2="665.3" stroke="#bdbdbd" stroke-width="1.2"/><line x1="1308.0" y1="651.9" x2="1308.0" y2="664.2" stroke="#bdbdbd" stroke-width="1.2"/><line x1="1319.3" y1="651.6" x2="1319.3" y2="663.1" stroke="#bdbdbd" stroke-width="1.2"/><line x1="1330.6" y1="651.3" x2="1330.6" y2="661.9" stroke="#bdbdbd" stroke-width="1.2"/><line x1="1195.0" y1="704.4" x2="1195.0" y2="724.1" stroke="#bdbdbd" stroke-width="1.2"/><line x1="1206.3" y1="702.9" x2="1206.3" y2="722.1" stroke="#bdbdbd" stroke-width="1.2"/><line x1="1217.6" y1="701.5" x2="1217.6" y2="720.0" stroke="#bdbdbd" stroke-width="1.2"/><line x1="1228.9" y1="700.1" x2="1228.9" y2="718.0" stroke="#bdbdbd" stroke-width="1.2"/><line x1="1240.2" y1="698.6" x2="1240.2" y2="716.0" stroke="#bdbdbd" stroke-width="1.2"/><line x1="1251.5" y1="697.2" x2="1251.5" y2="713.9" stroke="#bdbdbd" stroke-width="1.2"/><line x1="1262.8" y1="695.8" x2="1262.8" y2="711.9" stroke="#bdbdbd" stroke-width="1.2"/><line x1="1274.1" y1="694.3" x2="1274.1" y2="709.9" stroke="#bdbdbd" stroke-width="1.2"/><line x1="1285.4" y1="692.9" x2="1285.4" y2="707.8" stroke="#bdbdbd" stroke-width="1.2"/><line x1="1296.7" y1="691.5" x2="1296.7" y2="705.8" stroke="#bdbdbd" stroke-width="1.2"/><line x1="1308.0" y1="690.1" x2="1308.0" y2="703.8" stroke="#bdbdbd" stroke-width="1.2"/><line x1="1319.3" y1="688.6" x2="1319.3" y2="701.7" stroke="#bdbdbd" stroke-width="1.2"/><line x1="1330.6" y1="687.2" x2="1330.6" y2="699.7" stroke="#bdbdbd" stroke-width="1.2"/><line x1="1195.0" y1="748.0" x2="1195.0" y2="771.7" stroke="#bdbdbd" stroke-width="1.2"/><line x1="1206.3" y1="745.8" x2="1206.3" y2="768.9" stroke="#bdbdbd" stroke-width="1.2"/><line x1="1217.6" y1="743.7" x2="1217.6" y2="766.0" stroke="#bdbdbd" stroke-width="1.2"/><line x1="1228.9" y1="741.5" x2="1228.9" y2="763.1" stroke="#bdbdbd" stroke-width="1.2"/><line x1="1240.2" y1="739.3" x2="1240.2" y2="760.3" stroke="#bdbdbd" stroke-width="1.2"/><line x1="1251.5" y1="737.1" x2="1251.5" y2="757.4" stroke="#bdbdbd" stroke-width="1.2"/><line x1="1262.8" y1="734.9" x2="1262.8" y2="754.6" stroke="#bdbdbd" stroke-width="1.2"/><line x1="1274.1" y1="732.7" x2="1274.1" y2="751.7" stroke="#bdbdbd" stroke-width="1.2"/><line x1="1285.4" y1="730.6" x2="1285.4" y2="748.8" stroke="#bdbdbd" stroke-width="1.2"/><line x1="1296.7" y1="728.4" x2="1296.7" y2="746.0" stroke="#bdbdbd" stroke-width="1.2"/><line x1="1308.0" y1="726.2" x2="1308.0" y2="743.1" stroke="#bdbdbd" stroke-width="1.2"/><line x1="1319.3" y1="724.0" x2="1319.3" y2="740.2" stroke="#bdbdbd" stroke-width="1.2"/><line x1="1330.6" y1="721.8" x2="1330.6" y2="737.4" stroke="#bdbdbd" stroke-width="1.2"/><polygon points="1193.0,707.6 1240.0,701.3 1240.0,715.0 1193.0,723.5" fill="#8a8a8a" /><polygon points="1193.0,751.4 1235.0,743.6 1235.0,760.9 1193.0,771.3" fill="#8e8e8e" /><polygon points="1240.0,743.3 1290.0,733.7 1290.0,746.0 1240.0,758.0" fill="#999999" /><line x1="1302.0" y1="655.1" x2="1328.0" y2="659.4" stroke="#3f3f3f" stroke-width="3"/><line x1="1322.0" y1="656.1" x2="1334.0" y2="658.1" stroke="#4a4a4a" stroke-width="3"/><line x1="1302.0" y1="694.1" x2="1328.0" y2="696.7" stroke="#3f3f3f" stroke-width="3"/><line x1="1322.0" y1="695.1" x2="1334.0" y2="697.1" stroke="#4a4a4a" stroke-width="3"/><line x1="1302.0" y1="730.7" x2="1328.0" y2="734.0" stroke="#3f3f3f" stroke-width="3"/><line x1="1322.0" y1="731.7" x2="1334.0" y2="733.7" stroke="#4a4a4a" stroke-width="3"/><line x1="1240.0" y1="644.0" x2="1336.0" y2="644.0" stroke="#a9a9a9" stroke-width="1"/><line x1="1195.0" y1="785.6" x2="1202.0" y2="783.6" stroke="#3c3c3c" stroke-width="3"/><line x1="1207.0" y1="782.2" x2="1214.0" y2="780.2" stroke="#3c3c3c" stroke-width="3"/><line x1="1219.0" y1="778.9" x2="1226.0" y2="776.9" stroke="#3c3c3c" stroke-width="3"/><line x1="1231.0" y1="775.5" x2="1238.0" y2="773.5" stroke="#3c3c3c" stroke-width="3"/><line x1="1243.0" y1="772.2" x2="1250.0" y2="770.2" stroke="#3c3c3c" stroke-width="3"/><line x1="1255.0" y1="768.8" x2="1262.0" y2="766.8" stroke="#3c3c3c" stroke-width="3"/><line x1="1267.0" y1="765.4" x2="1274.0" y2="763.4" stroke="#3c3c3c" stroke-width="3"/><line x1="1279.0" y1="762.1" x2="1286.0" y2="760.1" stroke="#3c3c3c" stroke-width="3"/><line x1="1291.0" y1="758.7" x2="1298.0" y2="756.7" stroke="#3c3c3c" stroke-width="3"/><line x1="1303.0" y1="755.4" x2="1310.0" y2="753.4" stroke="#3c3c3c" stroke-width="3"/><line x1="1315.0" y1="752.0" x2="1322.0" y2="750.0" stroke="#3c3c3c" stroke-width="3"/><line x1="1327.0" y1="748.6" x2="1334.0" y2="746.6" stroke="#3c3c3c" stroke-width="3"/><line x1="1340.0" y1="613.0" x2="1340.0" y2="748.0" stroke="#adadad" stroke-width="1.5"/><polygon points="1234.0,760.0 1240.0,759.0 1240.0,777.0 1234.0,778.0" fill="#c99a70" /><polygon points="1074.0,566.0 1337.0,598.0 1337.0,613.0 1190.0,611.0 1074.0,592.0" fill="#bebebe" /><line x1="919.0" y1="578.5" x2="959.0" y2="578.5" stroke="#111" stroke-width="1"/><line x1="938.5" y1="557.0" x2="938.5" y2="598.0" stroke="#111" stroke-width="1"/></svg>

</body></html>
